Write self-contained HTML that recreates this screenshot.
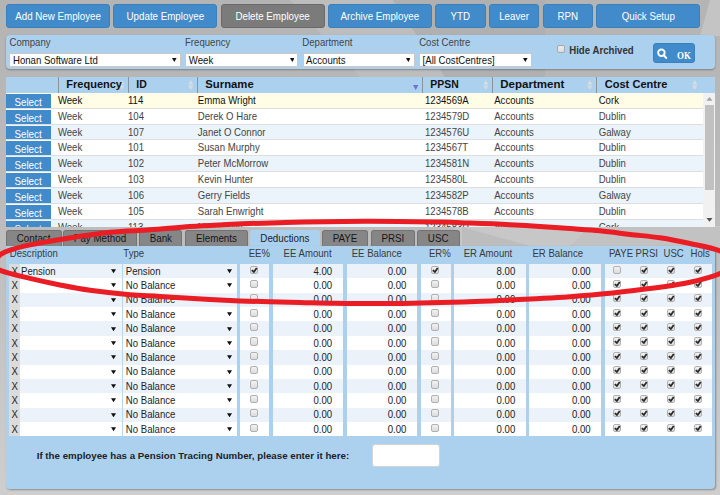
<!DOCTYPE html>
<html><head><meta charset="utf-8"><style>
html,body{margin:0;padding:0;}
body{width:720px;height:495px;position:relative;overflow:hidden;background:linear-gradient(180deg,#b4b4b4 0px,#bbbbbb 200px,#c2c2c2 300px,#cecece 495px);font-family:"Liberation Sans", sans-serif;}
</style></head><body>
<svg style="position:absolute;left:0;top:0" width="720" height="495"><polygon points="290,0 393,0 445,77 360,77" fill="#bdbdbd"/><polygon points="393,0 545,0 545,77 445,77" fill="#b0b0b0"/><polygon points="710,0 720,0 720,36 700,36" fill="#c4c4c4"/><rect x="455" y="226" width="265" height="21" fill="#c7c7c7"/><polygon points="462,227 530,246 462,246" fill="#bdbdbd"/><polygon points="590,227 720,227 720,246 570,246" fill="#c2c2c2"/></svg>
<div style="position:absolute;left:6.00px;top:4.00px;width:104.20px;height:24.00px;background:#428bca;border:1px solid #3b7fbd;box-sizing:border-box;border-radius:3px;"></div>
<svg style="position:absolute;left:0;top:0;overflow:visible" width="1" height="1"><text x="15.24" y="19.90" font-family="Liberation Sans" font-size="10.93" font-weight="normal" fill="#fff" textLength="85.71" lengthAdjust="spacingAndGlyphs">Add New Employee</text></svg>
<div style="position:absolute;left:113.25px;top:4.00px;width:104.20px;height:24.00px;background:#428bca;border:1px solid #3b7fbd;box-sizing:border-box;border-radius:3px;"></div>
<svg style="position:absolute;left:0;top:0;overflow:visible" width="1" height="1"><text x="126.56" y="19.90" font-family="Liberation Sans" font-size="10.93" font-weight="normal" fill="#fff" textLength="77.58" lengthAdjust="spacingAndGlyphs">Update Employee</text></svg>
<div style="position:absolute;left:220.50px;top:4.00px;width:104.20px;height:24.00px;background:#7b7b7b;border:1px solid #6a6a6a;box-sizing:border-box;border-radius:3px;"></div>
<svg style="position:absolute;left:0;top:0;overflow:visible" width="1" height="1"><text x="235.44" y="19.90" font-family="Liberation Sans" font-size="10.93" font-weight="normal" fill="#fff" textLength="74.32" lengthAdjust="spacingAndGlyphs">Delete Employee</text></svg>
<div style="position:absolute;left:327.75px;top:4.00px;width:104.20px;height:24.00px;background:#428bca;border:1px solid #3b7fbd;box-sizing:border-box;border-radius:3px;"></div>
<svg style="position:absolute;left:0;top:0;overflow:visible" width="1" height="1"><text x="340.52" y="19.90" font-family="Liberation Sans" font-size="10.93" font-weight="normal" fill="#fff" textLength="78.65" lengthAdjust="spacingAndGlyphs">Archive Employee</text></svg>
<div style="position:absolute;left:435.00px;top:4.00px;width:50.70px;height:24.00px;background:#428bca;border:1px solid #3b7fbd;box-sizing:border-box;border-radius:3px;"></div>
<svg style="position:absolute;left:0;top:0;overflow:visible" width="1" height="1"><text x="450.59" y="19.90" font-family="Liberation Sans" font-size="10.93" font-weight="normal" fill="#fff" textLength="19.52" lengthAdjust="spacingAndGlyphs">YTD</text></svg>
<div style="position:absolute;left:488.75px;top:4.00px;width:50.70px;height:24.00px;background:#428bca;border:1px solid #3b7fbd;box-sizing:border-box;border-radius:3px;"></div>
<svg style="position:absolute;left:0;top:0;overflow:visible" width="1" height="1"><text x="499.18" y="19.90" font-family="Liberation Sans" font-size="10.93" font-weight="normal" fill="#fff" textLength="29.84" lengthAdjust="spacingAndGlyphs">Leaver</text></svg>
<div style="position:absolute;left:542.50px;top:4.00px;width:50.70px;height:24.00px;background:#428bca;border:1px solid #3b7fbd;box-sizing:border-box;border-radius:3px;"></div>
<svg style="position:absolute;left:0;top:0;overflow:visible" width="1" height="1"><text x="557.55" y="19.90" font-family="Liberation Sans" font-size="10.93" font-weight="normal" fill="#fff" textLength="20.61" lengthAdjust="spacingAndGlyphs">RPN</text></svg>
<div style="position:absolute;left:596.25px;top:4.00px;width:104.20px;height:24.00px;background:#428bca;border:1px solid #3b7fbd;box-sizing:border-box;border-radius:3px;"></div>
<svg style="position:absolute;left:0;top:0;overflow:visible" width="1" height="1"><text x="621.77" y="19.90" font-family="Liberation Sans" font-size="10.93" font-weight="normal" fill="#fff" textLength="53.16" lengthAdjust="spacingAndGlyphs">Quick Setup</text></svg>
<div style="position:absolute;left:5.50px;top:35.00px;width:709.50px;height:34.30px;background:#abd1ef;border-radius:4px;box-shadow:0 1px 2px rgba(0,0,0,0.3);"></div>
<svg style="position:absolute;left:0;top:0;overflow:visible" width="1" height="1"><text x="9.50" y="46.00" font-family="Liberation Sans" font-size="10.75" font-weight="normal" fill="#444" textLength="41.08" lengthAdjust="spacingAndGlyphs">Company</text></svg>
<svg style="position:absolute;left:0;top:0;overflow:visible" width="1" height="1"><text x="185.00" y="46.00" font-family="Liberation Sans" font-size="10.75" font-weight="normal" fill="#444" textLength="45.35" lengthAdjust="spacingAndGlyphs">Frequency</text></svg>
<svg style="position:absolute;left:0;top:0;overflow:visible" width="1" height="1"><text x="302.30" y="46.00" font-family="Liberation Sans" font-size="10.75" font-weight="normal" fill="#444" textLength="50.15" lengthAdjust="spacingAndGlyphs">Department</text></svg>
<svg style="position:absolute;left:0;top:0;overflow:visible" width="1" height="1"><text x="419.20" y="46.00" font-family="Liberation Sans" font-size="10.75" font-weight="normal" fill="#444" textLength="51.22" lengthAdjust="spacingAndGlyphs">Cost Centre</text></svg>
<div style="position:absolute;left:9.40px;top:53.30px;width:171.40px;height:13.70px;background:#fff;border:1px solid #cfc8c2;box-sizing:border-box;"></div>
<svg style="position:absolute;left:0;top:0;overflow:visible" width="1" height="1"><text x="13.00" y="63.80" font-family="Liberation Sans" font-size="10.75" font-weight="normal" fill="#111" textLength="84.85" lengthAdjust="spacingAndGlyphs">Honan Software Ltd</text></svg>
<svg style="position:absolute;left:172.10px;top:58.1px" width="4.6" height="4" viewBox="0 0 4.6 4"><path d="M0 0 L4.6 0 L2.3 4 Z" fill="#111"/></svg>
<div style="position:absolute;left:185.25px;top:53.30px;width:112.95px;height:13.70px;background:#fff;border:1px solid #cfc8c2;box-sizing:border-box;"></div>
<svg style="position:absolute;left:0;top:0;overflow:visible" width="1" height="1"><text x="188.85" y="63.80" font-family="Liberation Sans" font-size="10.75" font-weight="normal" fill="#111" textLength="24.36" lengthAdjust="spacingAndGlyphs">Week</text></svg>
<svg style="position:absolute;left:289.50px;top:58.1px" width="4.6" height="4" viewBox="0 0 4.6 4"><path d="M0 0 L4.6 0 L2.3 4 Z" fill="#111"/></svg>
<div style="position:absolute;left:302.50px;top:53.30px;width:112.10px;height:13.70px;background:#fff;border:1px solid #cfc8c2;box-sizing:border-box;"></div>
<svg style="position:absolute;left:0;top:0;overflow:visible" width="1" height="1"><text x="306.10" y="63.80" font-family="Liberation Sans" font-size="10.75" font-weight="normal" fill="#111" textLength="39.49" lengthAdjust="spacingAndGlyphs">Accounts</text></svg>
<svg style="position:absolute;left:405.90px;top:58.1px" width="4.6" height="4" viewBox="0 0 4.6 4"><path d="M0 0 L4.6 0 L2.3 4 Z" fill="#111"/></svg>
<div style="position:absolute;left:419.00px;top:53.30px;width:112.80px;height:13.70px;background:#fff;border:1px solid #cfc8c2;box-sizing:border-box;"></div>
<svg style="position:absolute;left:0;top:0;overflow:visible" width="1" height="1"><text x="422.60" y="63.80" font-family="Liberation Sans" font-size="10.75" font-weight="normal" fill="#111" textLength="72.02" lengthAdjust="spacingAndGlyphs">[All CostCentres]</text></svg>
<svg style="position:absolute;left:523.10px;top:58.1px" width="4.6" height="4" viewBox="0 0 4.6 4"><path d="M0 0 L4.6 0 L2.3 4 Z" fill="#111"/></svg>
<div style="position:absolute;left:557.00px;top:45.20px;width:7.80px;height:8.10px;background:linear-gradient(#ececec,#dcdcdc);border:1px solid #a9a9a9;box-sizing:border-box;border-radius:2px;"></div>
<svg style="position:absolute;left:0;top:0;overflow:visible" width="1" height="1"><text x="569.20" y="54.10" font-family="Liberation Sans" font-size="10.3" font-weight="bold" fill="#333" textLength="64.50" lengthAdjust="spacingAndGlyphs">Hide Archived</text></svg>
<div style="position:absolute;left:653.10px;top:43.00px;width:41.70px;height:19.60px;background:#428bca;border:1px solid #3b7fbd;box-sizing:border-box;border-radius:3px;"></div>
<svg style="position:absolute;left:655px;top:47px" width="16" height="14" viewBox="0 0 16 14"><circle cx="6.4" cy="5.7" r="3.25" fill="none" stroke="#fff" stroke-width="1.9"/><line x1="8.8" y1="8.2" x2="11.2" y2="10.9" stroke="#fff" stroke-width="2.1" stroke-linecap="round"/></svg>
<svg style="position:absolute;left:0;top:0;overflow:visible" width="1" height="1"><text x="677.10" y="59.00" font-family="Liberation Serif" font-size="10.8" font-weight="bold" fill="#fff" textLength="13.90" lengthAdjust="spacingAndGlyphs">OK</text></svg>
<div style="position:absolute;left:5.60px;top:76.90px;width:709.40px;height:15.80px;background:#abd1ef;"></div>
<div style="position:absolute;left:57.90px;top:77.00px;width:1.20px;height:15.70px;background:#8c9399;"></div>
<div style="position:absolute;left:127.50px;top:77.00px;width:1.20px;height:15.70px;background:#8c9399;"></div>
<div style="position:absolute;left:196.90px;top:77.00px;width:1.20px;height:15.70px;background:#8c9399;"></div>
<div style="position:absolute;left:421.90px;top:77.00px;width:1.20px;height:15.70px;background:#8c9399;"></div>
<div style="position:absolute;left:491.90px;top:77.00px;width:1.20px;height:15.70px;background:#8c9399;"></div>
<div style="position:absolute;left:595.60px;top:77.00px;width:1.20px;height:15.70px;background:#8c9399;"></div>
<svg style="position:absolute;left:118.8px;top:80px" width="5.5" height="10" viewBox="0 0 5.5 10"><path d="M2.75 0.2 L5.5 4.4 L0 4.4 Z M2.75 9.8 L5.5 5.6 L0 5.6 Z" fill="#d9dcdc"/></svg>
<svg style="position:absolute;left:188.1px;top:80px" width="5.5" height="10" viewBox="0 0 5.5 10"><path d="M2.75 0.2 L5.5 4.4 L0 4.4 Z M2.75 9.8 L5.5 5.6 L0 5.6 Z" fill="#d9dcdc"/></svg>
<svg style="position:absolute;left:482.6px;top:80px" width="5.5" height="10" viewBox="0 0 5.5 10"><path d="M2.75 0.2 L5.5 4.4 L0 4.4 Z M2.75 9.8 L5.5 5.6 L0 5.6 Z" fill="#d9dcdc"/></svg>
<svg style="position:absolute;left:587.2px;top:80px" width="5.5" height="10" viewBox="0 0 5.5 10"><path d="M2.75 0.2 L5.5 4.4 L0 4.4 Z M2.75 9.8 L5.5 5.6 L0 5.6 Z" fill="#d9dcdc"/></svg>
<svg style="position:absolute;left:691.8px;top:80px" width="5.5" height="10" viewBox="0 0 5.5 10"><path d="M2.75 0.2 L5.5 4.4 L0 4.4 Z M2.75 9.8 L5.5 5.6 L0 5.6 Z" fill="#d9dcdc"/></svg>
<svg style="position:absolute;left:412.8px;top:84.9px" width="5.4" height="5.1" viewBox="0 0 5.4 5.1"><path d="M0 0 L5.4 0 L2.7 5.1 Z" fill="#7371d8"/></svg>
<svg style="position:absolute;left:0;top:0;overflow:visible" width="1" height="1"><text x="66.30" y="88.00" font-family="Liberation Sans" font-size="10.6" font-weight="bold" fill="#111" textLength="55.70" lengthAdjust="spacingAndGlyphs">Frequency</text></svg>
<svg style="position:absolute;left:0;top:0;overflow:visible" width="1" height="1"><text x="136.25" y="88.00" font-family="Liberation Sans" font-size="10.6" font-weight="bold" fill="#111" textLength="10.50" lengthAdjust="spacingAndGlyphs">ID</text></svg>
<svg style="position:absolute;left:0;top:0;overflow:visible" width="1" height="1"><text x="205.30" y="88.00" font-family="Liberation Sans" font-size="10.6" font-weight="bold" fill="#111" textLength="48.40" lengthAdjust="spacingAndGlyphs">Surname</text></svg>
<svg style="position:absolute;left:0;top:0;overflow:visible" width="1" height="1"><text x="430.30" y="88.00" font-family="Liberation Sans" font-size="10.6" font-weight="bold" fill="#111" textLength="28.40" lengthAdjust="spacingAndGlyphs">PPSN</text></svg>
<svg style="position:absolute;left:0;top:0;overflow:visible" width="1" height="1"><text x="500.20" y="88.00" font-family="Liberation Sans" font-size="10.6" font-weight="bold" fill="#111" textLength="64.10" lengthAdjust="spacingAndGlyphs">Department</text></svg>
<svg style="position:absolute;left:0;top:0;overflow:visible" width="1" height="1"><text x="604.70" y="88.00" font-family="Liberation Sans" font-size="10.6" font-weight="bold" fill="#111" textLength="62.80" lengthAdjust="spacingAndGlyphs">Cost Centre</text></svg>
<div style="position:absolute;left:0;top:93px;width:720px;height:134.10px;overflow:hidden;background:transparent">
<div style="position:absolute;left:5.60px;top:0.00px;width:709.40px;height:134.10px;background:#fff;"></div>
<div style="position:absolute;left:5.6px;top:0.00px;width:697.40px;height:14.83px;background:#fffde5;border-bottom:1px solid #dedede"></div>
<div style="position:absolute;left:5.6px;top:1.00px;width:45.30px;height:13.83px;background:#428bca"></div>
<svg style="position:absolute;left:0;top:0;overflow:visible" width="1" height="1"><text x="14.40" y="12.90" font-family="Liberation Sans" font-size="10.2" font-weight="normal" fill="#fff" textLength="27.30" lengthAdjust="spacingAndGlyphs">Select</text></svg>
<svg style="position:absolute;left:0;top:0;overflow:visible" width="1" height="1"><text x="57.90" y="10.90" font-family="Liberation Sans" font-size="10.75" font-weight="normal" fill="#111" textLength="24.36" lengthAdjust="spacingAndGlyphs">Week</text></svg>
<svg style="position:absolute;left:0;top:0;overflow:visible" width="1" height="1"><text x="128.00" y="10.90" font-family="Liberation Sans" font-size="10.75" font-weight="normal" fill="#111" textLength="15.30" lengthAdjust="spacingAndGlyphs">114</text></svg>
<svg style="position:absolute;left:0;top:0;overflow:visible" width="1" height="1"><text x="197.80" y="10.90" font-family="Liberation Sans" font-size="10.75" font-weight="normal" fill="#111" textLength="57.96" lengthAdjust="spacingAndGlyphs">Emma Wright</text></svg>
<svg style="position:absolute;left:0;top:0;overflow:visible" width="1" height="1"><text x="425.00" y="10.90" font-family="Liberation Sans" font-size="10.75" font-weight="normal" fill="#111" textLength="43.77" lengthAdjust="spacingAndGlyphs">1234569A</text></svg>
<svg style="position:absolute;left:0;top:0;overflow:visible" width="1" height="1"><text x="494.20" y="10.90" font-family="Liberation Sans" font-size="10.75" font-weight="normal" fill="#111" textLength="39.49" lengthAdjust="spacingAndGlyphs">Accounts</text></svg>
<svg style="position:absolute;left:0;top:0;overflow:visible" width="1" height="1"><text x="598.70" y="10.90" font-family="Liberation Sans" font-size="10.75" font-weight="normal" fill="#111" textLength="20.27" lengthAdjust="spacingAndGlyphs">Cork</text></svg>
<div style="position:absolute;left:5.6px;top:15.83px;width:697.40px;height:14.83px;background:#ffffff;border-bottom:1px solid #dedede"></div>
<div style="position:absolute;left:5.6px;top:16.83px;width:45.30px;height:13.83px;background:#428bca"></div>
<svg style="position:absolute;left:0;top:0;overflow:visible" width="1" height="1"><text x="14.40" y="28.73" font-family="Liberation Sans" font-size="10.2" font-weight="normal" fill="#fff" textLength="27.30" lengthAdjust="spacingAndGlyphs">Select</text></svg>
<svg style="position:absolute;left:0;top:0;overflow:visible" width="1" height="1"><text x="57.90" y="26.73" font-family="Liberation Sans" font-size="10.75" font-weight="normal" fill="#444" textLength="24.36" lengthAdjust="spacingAndGlyphs">Week</text></svg>
<svg style="position:absolute;left:0;top:0;overflow:visible" width="1" height="1"><text x="128.00" y="26.73" font-family="Liberation Sans" font-size="10.75" font-weight="normal" fill="#444" textLength="16.02" lengthAdjust="spacingAndGlyphs">104</text></svg>
<svg style="position:absolute;left:0;top:0;overflow:visible" width="1" height="1"><text x="197.80" y="26.73" font-family="Liberation Sans" font-size="10.75" font-weight="normal" fill="#444" textLength="59.21" lengthAdjust="spacingAndGlyphs">Derek O Hare</text></svg>
<svg style="position:absolute;left:0;top:0;overflow:visible" width="1" height="1"><text x="425.00" y="26.73" font-family="Liberation Sans" font-size="10.75" font-weight="normal" fill="#444" textLength="44.30" lengthAdjust="spacingAndGlyphs">1234579D</text></svg>
<svg style="position:absolute;left:0;top:0;overflow:visible" width="1" height="1"><text x="494.20" y="26.73" font-family="Liberation Sans" font-size="10.75" font-weight="normal" fill="#444" textLength="39.49" lengthAdjust="spacingAndGlyphs">Accounts</text></svg>
<svg style="position:absolute;left:0;top:0;overflow:visible" width="1" height="1"><text x="598.70" y="26.73" font-family="Liberation Sans" font-size="10.75" font-weight="normal" fill="#444" textLength="27.21" lengthAdjust="spacingAndGlyphs">Dublin</text></svg>
<div style="position:absolute;left:5.6px;top:31.66px;width:697.40px;height:14.83px;background:#ebf3fb;border-bottom:1px solid #dedede"></div>
<div style="position:absolute;left:5.6px;top:32.66px;width:45.30px;height:13.83px;background:#428bca"></div>
<svg style="position:absolute;left:0;top:0;overflow:visible" width="1" height="1"><text x="14.40" y="44.56" font-family="Liberation Sans" font-size="10.2" font-weight="normal" fill="#fff" textLength="27.30" lengthAdjust="spacingAndGlyphs">Select</text></svg>
<svg style="position:absolute;left:0;top:0;overflow:visible" width="1" height="1"><text x="57.90" y="42.56" font-family="Liberation Sans" font-size="10.75" font-weight="normal" fill="#444" textLength="24.36" lengthAdjust="spacingAndGlyphs">Week</text></svg>
<svg style="position:absolute;left:0;top:0;overflow:visible" width="1" height="1"><text x="128.00" y="42.56" font-family="Liberation Sans" font-size="10.75" font-weight="normal" fill="#444" textLength="16.02" lengthAdjust="spacingAndGlyphs">107</text></svg>
<svg style="position:absolute;left:0;top:0;overflow:visible" width="1" height="1"><text x="197.80" y="42.56" font-family="Liberation Sans" font-size="10.75" font-weight="normal" fill="#444" textLength="67.77" lengthAdjust="spacingAndGlyphs">Janet O Connor</text></svg>
<svg style="position:absolute;left:0;top:0;overflow:visible" width="1" height="1"><text x="425.00" y="42.56" font-family="Liberation Sans" font-size="10.75" font-weight="normal" fill="#444" textLength="44.30" lengthAdjust="spacingAndGlyphs">1234576U</text></svg>
<svg style="position:absolute;left:0;top:0;overflow:visible" width="1" height="1"><text x="494.20" y="42.56" font-family="Liberation Sans" font-size="10.75" font-weight="normal" fill="#444" textLength="39.49" lengthAdjust="spacingAndGlyphs">Accounts</text></svg>
<svg style="position:absolute;left:0;top:0;overflow:visible" width="1" height="1"><text x="598.70" y="42.56" font-family="Liberation Sans" font-size="10.75" font-weight="normal" fill="#444" textLength="32.01" lengthAdjust="spacingAndGlyphs">Galway</text></svg>
<div style="position:absolute;left:5.6px;top:47.49px;width:697.40px;height:14.83px;background:#ffffff;border-bottom:1px solid #dedede"></div>
<div style="position:absolute;left:5.6px;top:48.49px;width:45.30px;height:13.83px;background:#428bca"></div>
<svg style="position:absolute;left:0;top:0;overflow:visible" width="1" height="1"><text x="14.40" y="60.39" font-family="Liberation Sans" font-size="10.2" font-weight="normal" fill="#fff" textLength="27.30" lengthAdjust="spacingAndGlyphs">Select</text></svg>
<svg style="position:absolute;left:0;top:0;overflow:visible" width="1" height="1"><text x="57.90" y="58.39" font-family="Liberation Sans" font-size="10.75" font-weight="normal" fill="#444" textLength="24.36" lengthAdjust="spacingAndGlyphs">Week</text></svg>
<svg style="position:absolute;left:0;top:0;overflow:visible" width="1" height="1"><text x="128.00" y="58.39" font-family="Liberation Sans" font-size="10.75" font-weight="normal" fill="#444" textLength="16.02" lengthAdjust="spacingAndGlyphs">101</text></svg>
<svg style="position:absolute;left:0;top:0;overflow:visible" width="1" height="1"><text x="197.80" y="58.39" font-family="Liberation Sans" font-size="10.75" font-weight="normal" fill="#444" textLength="61.89" lengthAdjust="spacingAndGlyphs">Susan Murphy</text></svg>
<svg style="position:absolute;left:0;top:0;overflow:visible" width="1" height="1"><text x="425.00" y="58.39" font-family="Liberation Sans" font-size="10.75" font-weight="normal" fill="#444" textLength="43.23" lengthAdjust="spacingAndGlyphs">1234567T</text></svg>
<svg style="position:absolute;left:0;top:0;overflow:visible" width="1" height="1"><text x="494.20" y="58.39" font-family="Liberation Sans" font-size="10.75" font-weight="normal" fill="#444" textLength="39.49" lengthAdjust="spacingAndGlyphs">Accounts</text></svg>
<svg style="position:absolute;left:0;top:0;overflow:visible" width="1" height="1"><text x="598.70" y="58.39" font-family="Liberation Sans" font-size="10.75" font-weight="normal" fill="#444" textLength="27.21" lengthAdjust="spacingAndGlyphs">Dublin</text></svg>
<div style="position:absolute;left:5.6px;top:63.32px;width:697.40px;height:14.83px;background:#ebf3fb;border-bottom:1px solid #dedede"></div>
<div style="position:absolute;left:5.6px;top:64.32px;width:45.30px;height:13.83px;background:#428bca"></div>
<svg style="position:absolute;left:0;top:0;overflow:visible" width="1" height="1"><text x="14.40" y="76.22" font-family="Liberation Sans" font-size="10.2" font-weight="normal" fill="#fff" textLength="27.30" lengthAdjust="spacingAndGlyphs">Select</text></svg>
<svg style="position:absolute;left:0;top:0;overflow:visible" width="1" height="1"><text x="57.90" y="74.22" font-family="Liberation Sans" font-size="10.75" font-weight="normal" fill="#444" textLength="24.36" lengthAdjust="spacingAndGlyphs">Week</text></svg>
<svg style="position:absolute;left:0;top:0;overflow:visible" width="1" height="1"><text x="128.00" y="74.22" font-family="Liberation Sans" font-size="10.75" font-weight="normal" fill="#444" textLength="16.02" lengthAdjust="spacingAndGlyphs">102</text></svg>
<svg style="position:absolute;left:0;top:0;overflow:visible" width="1" height="1"><text x="197.80" y="74.22" font-family="Liberation Sans" font-size="10.75" font-weight="normal" fill="#444" textLength="70.41" lengthAdjust="spacingAndGlyphs">Peter McMorrow</text></svg>
<svg style="position:absolute;left:0;top:0;overflow:visible" width="1" height="1"><text x="425.00" y="74.22" font-family="Liberation Sans" font-size="10.75" font-weight="normal" fill="#444" textLength="44.30" lengthAdjust="spacingAndGlyphs">1234581N</text></svg>
<svg style="position:absolute;left:0;top:0;overflow:visible" width="1" height="1"><text x="494.20" y="74.22" font-family="Liberation Sans" font-size="10.75" font-weight="normal" fill="#444" textLength="39.49" lengthAdjust="spacingAndGlyphs">Accounts</text></svg>
<svg style="position:absolute;left:0;top:0;overflow:visible" width="1" height="1"><text x="598.70" y="74.22" font-family="Liberation Sans" font-size="10.75" font-weight="normal" fill="#444" textLength="27.21" lengthAdjust="spacingAndGlyphs">Dublin</text></svg>
<div style="position:absolute;left:5.6px;top:79.15px;width:697.40px;height:14.83px;background:#ffffff;border-bottom:1px solid #dedede"></div>
<div style="position:absolute;left:5.6px;top:80.15px;width:45.30px;height:13.83px;background:#428bca"></div>
<svg style="position:absolute;left:0;top:0;overflow:visible" width="1" height="1"><text x="14.40" y="92.05" font-family="Liberation Sans" font-size="10.2" font-weight="normal" fill="#fff" textLength="27.30" lengthAdjust="spacingAndGlyphs">Select</text></svg>
<svg style="position:absolute;left:0;top:0;overflow:visible" width="1" height="1"><text x="57.90" y="90.05" font-family="Liberation Sans" font-size="10.75" font-weight="normal" fill="#444" textLength="24.36" lengthAdjust="spacingAndGlyphs">Week</text></svg>
<svg style="position:absolute;left:0;top:0;overflow:visible" width="1" height="1"><text x="128.00" y="90.05" font-family="Liberation Sans" font-size="10.75" font-weight="normal" fill="#444" textLength="16.02" lengthAdjust="spacingAndGlyphs">103</text></svg>
<svg style="position:absolute;left:0;top:0;overflow:visible" width="1" height="1"><text x="197.80" y="90.05" font-family="Liberation Sans" font-size="10.75" font-weight="normal" fill="#444" textLength="55.49" lengthAdjust="spacingAndGlyphs">Kevin Hunter</text></svg>
<svg style="position:absolute;left:0;top:0;overflow:visible" width="1" height="1"><text x="425.00" y="90.05" font-family="Liberation Sans" font-size="10.75" font-weight="normal" fill="#444" textLength="42.71" lengthAdjust="spacingAndGlyphs">1234580L</text></svg>
<svg style="position:absolute;left:0;top:0;overflow:visible" width="1" height="1"><text x="494.20" y="90.05" font-family="Liberation Sans" font-size="10.75" font-weight="normal" fill="#444" textLength="39.49" lengthAdjust="spacingAndGlyphs">Accounts</text></svg>
<svg style="position:absolute;left:0;top:0;overflow:visible" width="1" height="1"><text x="598.70" y="90.05" font-family="Liberation Sans" font-size="10.75" font-weight="normal" fill="#444" textLength="27.21" lengthAdjust="spacingAndGlyphs">Dublin</text></svg>
<div style="position:absolute;left:5.6px;top:94.98px;width:697.40px;height:14.83px;background:#ebf3fb;border-bottom:1px solid #dedede"></div>
<div style="position:absolute;left:5.6px;top:95.98px;width:45.30px;height:13.83px;background:#428bca"></div>
<svg style="position:absolute;left:0;top:0;overflow:visible" width="1" height="1"><text x="14.40" y="107.88" font-family="Liberation Sans" font-size="10.2" font-weight="normal" fill="#fff" textLength="27.30" lengthAdjust="spacingAndGlyphs">Select</text></svg>
<svg style="position:absolute;left:0;top:0;overflow:visible" width="1" height="1"><text x="57.90" y="105.88" font-family="Liberation Sans" font-size="10.75" font-weight="normal" fill="#444" textLength="24.36" lengthAdjust="spacingAndGlyphs">Week</text></svg>
<svg style="position:absolute;left:0;top:0;overflow:visible" width="1" height="1"><text x="128.00" y="105.88" font-family="Liberation Sans" font-size="10.75" font-weight="normal" fill="#444" textLength="16.02" lengthAdjust="spacingAndGlyphs">106</text></svg>
<svg style="position:absolute;left:0;top:0;overflow:visible" width="1" height="1"><text x="197.80" y="105.88" font-family="Liberation Sans" font-size="10.75" font-weight="normal" fill="#444" textLength="52.27" lengthAdjust="spacingAndGlyphs">Gerry Fields</text></svg>
<svg style="position:absolute;left:0;top:0;overflow:visible" width="1" height="1"><text x="425.00" y="105.88" font-family="Liberation Sans" font-size="10.75" font-weight="normal" fill="#444" textLength="43.77" lengthAdjust="spacingAndGlyphs">1234582P</text></svg>
<svg style="position:absolute;left:0;top:0;overflow:visible" width="1" height="1"><text x="494.20" y="105.88" font-family="Liberation Sans" font-size="10.75" font-weight="normal" fill="#444" textLength="39.49" lengthAdjust="spacingAndGlyphs">Accounts</text></svg>
<svg style="position:absolute;left:0;top:0;overflow:visible" width="1" height="1"><text x="598.70" y="105.88" font-family="Liberation Sans" font-size="10.75" font-weight="normal" fill="#444" textLength="32.01" lengthAdjust="spacingAndGlyphs">Galway</text></svg>
<div style="position:absolute;left:5.6px;top:110.81px;width:697.40px;height:14.83px;background:#ffffff;border-bottom:1px solid #dedede"></div>
<div style="position:absolute;left:5.6px;top:111.81px;width:45.30px;height:13.83px;background:#428bca"></div>
<svg style="position:absolute;left:0;top:0;overflow:visible" width="1" height="1"><text x="14.40" y="123.71" font-family="Liberation Sans" font-size="10.2" font-weight="normal" fill="#fff" textLength="27.30" lengthAdjust="spacingAndGlyphs">Select</text></svg>
<svg style="position:absolute;left:0;top:0;overflow:visible" width="1" height="1"><text x="57.90" y="121.71" font-family="Liberation Sans" font-size="10.75" font-weight="normal" fill="#444" textLength="24.36" lengthAdjust="spacingAndGlyphs">Week</text></svg>
<svg style="position:absolute;left:0;top:0;overflow:visible" width="1" height="1"><text x="128.00" y="121.71" font-family="Liberation Sans" font-size="10.75" font-weight="normal" fill="#444" textLength="16.02" lengthAdjust="spacingAndGlyphs">105</text></svg>
<svg style="position:absolute;left:0;top:0;overflow:visible" width="1" height="1"><text x="197.80" y="121.71" font-family="Liberation Sans" font-size="10.75" font-weight="normal" fill="#444" textLength="65.63" lengthAdjust="spacingAndGlyphs">Sarah Enwright</text></svg>
<svg style="position:absolute;left:0;top:0;overflow:visible" width="1" height="1"><text x="425.00" y="121.71" font-family="Liberation Sans" font-size="10.75" font-weight="normal" fill="#444" textLength="43.77" lengthAdjust="spacingAndGlyphs">1234578B</text></svg>
<svg style="position:absolute;left:0;top:0;overflow:visible" width="1" height="1"><text x="494.20" y="121.71" font-family="Liberation Sans" font-size="10.75" font-weight="normal" fill="#444" textLength="39.49" lengthAdjust="spacingAndGlyphs">Accounts</text></svg>
<svg style="position:absolute;left:0;top:0;overflow:visible" width="1" height="1"><text x="598.70" y="121.71" font-family="Liberation Sans" font-size="10.75" font-weight="normal" fill="#444" textLength="27.21" lengthAdjust="spacingAndGlyphs">Dublin</text></svg>
<div style="position:absolute;left:5.6px;top:126.64px;width:697.40px;height:14.83px;background:#ebf3fb;border-bottom:1px solid #dedede"></div>
<div style="position:absolute;left:5.6px;top:127.64px;width:45.30px;height:13.83px;background:#428bca"></div>
<svg style="position:absolute;left:0;top:0;overflow:visible" width="1" height="1"><text x="14.40" y="139.54" font-family="Liberation Sans" font-size="10.2" font-weight="normal" fill="#fff" textLength="27.30" lengthAdjust="spacingAndGlyphs">Select</text></svg>
<svg style="position:absolute;left:0;top:0;overflow:visible" width="1" height="1"><text x="57.90" y="137.54" font-family="Liberation Sans" font-size="10.75" font-weight="normal" fill="#444" textLength="24.36" lengthAdjust="spacingAndGlyphs">Week</text></svg>
<svg style="position:absolute;left:0;top:0;overflow:visible" width="1" height="1"><text x="128.00" y="137.54" font-family="Liberation Sans" font-size="10.75" font-weight="normal" fill="#444" textLength="15.30" lengthAdjust="spacingAndGlyphs">113</text></svg>
<svg style="position:absolute;left:0;top:0;overflow:visible" width="1" height="1"><text x="197.80" y="137.54" font-family="Liberation Sans" font-size="10.75" font-weight="normal" fill="#444" textLength="44.81" lengthAdjust="spacingAndGlyphs">Mary Kelly</text></svg>
<svg style="position:absolute;left:0;top:0;overflow:visible" width="1" height="1"><text x="425.00" y="137.54" font-family="Liberation Sans" font-size="10.75" font-weight="normal" fill="#444" textLength="44.30" lengthAdjust="spacingAndGlyphs">1234583R</text></svg>
<svg style="position:absolute;left:0;top:0;overflow:visible" width="1" height="1"><text x="494.20" y="137.54" font-family="Liberation Sans" font-size="10.75" font-weight="normal" fill="#444" textLength="39.49" lengthAdjust="spacingAndGlyphs">Accounts</text></svg>
<svg style="position:absolute;left:0;top:0;overflow:visible" width="1" height="1"><text x="598.70" y="137.54" font-family="Liberation Sans" font-size="10.75" font-weight="normal" fill="#444" textLength="20.27" lengthAdjust="spacingAndGlyphs">Cork</text></svg>
</div>
<div style="position:absolute;left:703.00px;top:93.00px;width:12.00px;height:134.10px;background:#f1f1f1;"></div>
<div style="position:absolute;left:704.80px;top:105.20px;width:8.90px;height:84.50px;background:#c1c1c1;"></div>
<svg style="position:absolute;left:705.5px;top:96.5px" width="7" height="4" viewBox="0 0 7 4"><path d="M3.5 0 L6.5 3.8 L0.5 3.8 Z" fill="#a3a3a3"/></svg>
<svg style="position:absolute;left:705.5px;top:218px" width="7" height="4" viewBox="0 0 7 4"><path d="M3.5 3.8 L6.5 0 L0.5 0 Z" fill="#505050"/></svg>
<div style="position:absolute;left:5.50px;top:230.20px;width:56.20px;height:15.40px;background:#868686;border:1px solid #737373;border-bottom:none;box-sizing:border-box;border-radius:3px 3px 0 0;"></div>
<svg style="position:absolute;left:0;top:0;overflow:visible" width="1" height="1"><text x="16.71" y="241.70" font-family="Liberation Sans" font-size="10.98" font-weight="normal" fill="#151515" textLength="33.77" lengthAdjust="spacingAndGlyphs">Contact</text></svg>
<div style="position:absolute;left:63.00px;top:230.20px;width:74.00px;height:15.40px;background:#868686;border:1px solid #737373;border-bottom:none;box-sizing:border-box;border-radius:3px 3px 0 0;"></div>
<svg style="position:absolute;left:0;top:0;overflow:visible" width="1" height="1"><text x="73.85" y="241.70" font-family="Liberation Sans" font-size="10.98" font-weight="normal" fill="#151515" textLength="52.29" lengthAdjust="spacingAndGlyphs">Pay Method</text></svg>
<div style="position:absolute;left:139.20px;top:230.20px;width:43.30px;height:15.40px;background:#868686;border:1px solid #737373;border-bottom:none;box-sizing:border-box;border-radius:3px 3px 0 0;"></div>
<svg style="position:absolute;left:0;top:0;overflow:visible" width="1" height="1"><text x="149.68" y="241.70" font-family="Liberation Sans" font-size="10.98" font-weight="normal" fill="#151515" textLength="22.34" lengthAdjust="spacingAndGlyphs">Bank</text></svg>
<div style="position:absolute;left:185.00px;top:230.20px;width:63.00px;height:15.40px;background:#868686;border:1px solid #737373;border-bottom:none;box-sizing:border-box;border-radius:3px 3px 0 0;"></div>
<svg style="position:absolute;left:0;top:0;overflow:visible" width="1" height="1"><text x="196.08" y="241.70" font-family="Liberation Sans" font-size="10.98" font-weight="normal" fill="#151515" textLength="40.85" lengthAdjust="spacingAndGlyphs">Elements</text></svg>
<div style="position:absolute;left:249.70px;top:230.20px;width:70.30px;height:15.80px;background:#abd1ef;border-radius:3px 3px 0 0;"></div>
<svg style="position:absolute;left:0;top:0;overflow:visible" width="1" height="1"><text x="260.34" y="241.70" font-family="Liberation Sans" font-size="10.98" font-weight="normal" fill="#222" textLength="49.03" lengthAdjust="spacingAndGlyphs">Deductions</text></svg>
<div style="position:absolute;left:321.70px;top:230.20px;width:46.60px;height:15.40px;background:#868686;border:1px solid #737373;border-bottom:none;box-sizing:border-box;border-radius:3px 3px 0 0;"></div>
<svg style="position:absolute;left:0;top:0;overflow:visible" width="1" height="1"><text x="332.65" y="241.70" font-family="Liberation Sans" font-size="10.98" font-weight="normal" fill="#151515" textLength="24.69" lengthAdjust="spacingAndGlyphs">PAYE</text></svg>
<div style="position:absolute;left:370.80px;top:230.20px;width:44.20px;height:15.40px;background:#868686;border:1px solid #737373;border-bottom:none;box-sizing:border-box;border-radius:3px 3px 0 0;"></div>
<svg style="position:absolute;left:0;top:0;overflow:visible" width="1" height="1"><text x="381.46" y="241.70" font-family="Liberation Sans" font-size="10.98" font-weight="normal" fill="#151515" textLength="22.87" lengthAdjust="spacingAndGlyphs">PRSI</text></svg>
<div style="position:absolute;left:416.70px;top:230.20px;width:43.00px;height:15.40px;background:#868686;border:1px solid #737373;border-bottom:none;box-sizing:border-box;border-radius:3px 3px 0 0;"></div>
<svg style="position:absolute;left:0;top:0;overflow:visible" width="1" height="1"><text x="427.85" y="241.70" font-family="Liberation Sans" font-size="10.98" font-weight="normal" fill="#151515" textLength="20.69" lengthAdjust="spacingAndGlyphs">USC</text></svg>
<div style="position:absolute;left:5.50px;top:245.60px;width:709.50px;height:243.15px;background:#abd1ef;border-radius:0 0 4px 4px;box-shadow:1px 1px 2px rgba(0,0,0,0.32);"></div>
<svg style="position:absolute;left:0;top:0;overflow:visible" width="1" height="1"><text x="9.80" y="256.70" font-family="Liberation Sans" font-size="10.75" font-weight="normal" fill="#3a3a3a" textLength="48.02" lengthAdjust="spacingAndGlyphs">Description</text></svg>
<svg style="position:absolute;left:0;top:0;overflow:visible" width="1" height="1"><text x="123.30" y="256.70" font-family="Liberation Sans" font-size="10.75" font-weight="normal" fill="#3a3a3a" textLength="20.81" lengthAdjust="spacingAndGlyphs">Type</text></svg>
<svg style="position:absolute;left:0;top:0;overflow:visible" width="1" height="1"><text x="248.70" y="256.70" font-family="Liberation Sans" font-size="10.75" font-weight="normal" fill="#3a3a3a" textLength="21.34" lengthAdjust="spacingAndGlyphs">EE%</text></svg>
<svg style="position:absolute;left:0;top:0;overflow:visible" width="1" height="1"><text x="283.60" y="256.70" font-family="Liberation Sans" font-size="10.75" font-weight="normal" fill="#3a3a3a" textLength="48.03" lengthAdjust="spacingAndGlyphs">EE Amount</text></svg>
<svg style="position:absolute;left:0;top:0;overflow:visible" width="1" height="1"><text x="351.70" y="256.70" font-family="Liberation Sans" font-size="10.75" font-weight="normal" fill="#3a3a3a" textLength="50.16" lengthAdjust="spacingAndGlyphs">EE Balance</text></svg>
<svg style="position:absolute;left:0;top:0;overflow:visible" width="1" height="1"><text x="428.90" y="256.70" font-family="Liberation Sans" font-size="10.75" font-weight="normal" fill="#3a3a3a" textLength="21.87" lengthAdjust="spacingAndGlyphs">ER%</text></svg>
<svg style="position:absolute;left:0;top:0;overflow:visible" width="1" height="1"><text x="463.70" y="256.70" font-family="Liberation Sans" font-size="10.75" font-weight="normal" fill="#3a3a3a" textLength="48.56" lengthAdjust="spacingAndGlyphs">ER Amount</text></svg>
<svg style="position:absolute;left:0;top:0;overflow:visible" width="1" height="1"><text x="532.40" y="256.70" font-family="Liberation Sans" font-size="10.75" font-weight="normal" fill="#3a3a3a" textLength="50.69" lengthAdjust="spacingAndGlyphs">ER Balance</text></svg>
<svg style="position:absolute;left:0;top:0;overflow:visible" width="1" height="1"><text x="608.90" y="256.70" font-family="Liberation Sans" font-size="10.75" font-weight="normal" fill="#3a3a3a" textLength="24.19" lengthAdjust="spacingAndGlyphs">PAYE</text></svg>
<svg style="position:absolute;left:0;top:0;overflow:visible" width="1" height="1"><text x="635.60" y="256.70" font-family="Liberation Sans" font-size="10.75" font-weight="normal" fill="#3a3a3a" textLength="22.41" lengthAdjust="spacingAndGlyphs">PRSI</text></svg>
<svg style="position:absolute;left:0;top:0;overflow:visible" width="1" height="1"><text x="663.50" y="256.70" font-family="Liberation Sans" font-size="10.75" font-weight="normal" fill="#3a3a3a" textLength="20.27" lengthAdjust="spacingAndGlyphs">USC</text></svg>
<svg style="position:absolute;left:0;top:0;overflow:visible" width="1" height="1"><text x="690.60" y="256.70" font-family="Liberation Sans" font-size="10.75" font-weight="normal" fill="#3a3a3a" textLength="19.20" lengthAdjust="spacingAndGlyphs">Hols</text></svg>
<div style="position:absolute;left:9.00px;top:264.00px;width:11.00px;height:14.37px;background:#dcdcdc;"></div>
<svg style="position:absolute;left:0;top:0;overflow:visible" width="1" height="1"><text x="11.50" y="274.70" font-family="Liberation Sans" font-size="10.75" font-weight="normal" fill="#222" textLength="6.40" lengthAdjust="spacingAndGlyphs">X</text></svg>
<div style="position:absolute;left:20.00px;top:264.00px;width:101.80px;height:14.37px;background:#ebf2fa;"></div>
<svg style="position:absolute;left:0;top:0;overflow:visible" width="1" height="1"><text x="21.00" y="274.70" font-family="Liberation Sans" font-size="10.75" font-weight="normal" fill="#1e1e1e" textLength="34.69" lengthAdjust="spacingAndGlyphs">Pension</text></svg>
<svg style="position:absolute;left:110.9px;top:269.10px" width="5" height="4.5" viewBox="0 0 5 4.5"><path d="M0 0.3 L5 0.3 L2.5 4.3 Z" fill="#111"/></svg>
<div style="position:absolute;left:121.80px;top:264.00px;width:1.20px;height:14.37px;background:#b9d8f0;"></div>
<div style="position:absolute;left:123.00px;top:264.00px;width:113.70px;height:14.37px;background:#ebf2fa;"></div>
<svg style="position:absolute;left:0;top:0;overflow:visible" width="1" height="1"><text x="125.80" y="274.70" font-family="Liberation Sans" font-size="10.75" font-weight="normal" fill="#1e1e1e" textLength="34.69" lengthAdjust="spacingAndGlyphs">Pension</text></svg>
<svg style="position:absolute;left:227.2px;top:269.10px" width="5" height="4.5" viewBox="0 0 5 4.5"><path d="M0 0.3 L5 0.3 L2.5 4.3 Z" fill="#111"/></svg>
<div style="position:absolute;left:240.00px;top:264.00px;width:29.20px;height:14.37px;background:#ebf2fa;"></div>
<div style="position:absolute;left:250.00px;top:265.50px;width:8.10px;height:8.20px;background:linear-gradient(#f2f2f2,#dcdcdc);border:1px solid #b0b0b0;box-sizing:border-box;border-radius:2px;"><svg width="8.1" height="8.2" viewBox="0 0 8.1 8.2" style="position:absolute;left:-1px;top:-1px"><path d="M1.8 4.1 L3.9 6.0 L6.7 1.9" fill="none" stroke="#2a2a2a" stroke-width="1.8"/></svg></div>
<div style="position:absolute;left:272.80px;top:264.00px;width:70.20px;height:14.37px;background:#ebf2fa;"></div>
<svg style="position:absolute;left:0;top:0;overflow:visible" width="1" height="1"><text x="313.52" y="274.70" font-family="Liberation Sans" font-size="10.75" font-weight="normal" fill="#222" textLength="18.68" lengthAdjust="spacingAndGlyphs">4.00</text></svg>
<div style="position:absolute;left:346.90px;top:264.00px;width:70.00px;height:14.37px;background:#ebf2fa;"></div>
<svg style="position:absolute;left:0;top:0;overflow:visible" width="1" height="1"><text x="387.72" y="274.70" font-family="Liberation Sans" font-size="10.75" font-weight="normal" fill="#222" textLength="18.68" lengthAdjust="spacingAndGlyphs">0.00</text></svg>
<div style="position:absolute;left:420.60px;top:264.00px;width:30.50px;height:14.37px;background:#ebf2fa;"></div>
<div style="position:absolute;left:431.30px;top:265.50px;width:8.10px;height:8.20px;background:linear-gradient(#f2f2f2,#dcdcdc);border:1px solid #b0b0b0;box-sizing:border-box;border-radius:2px;"><svg width="8.1" height="8.2" viewBox="0 0 8.1 8.2" style="position:absolute;left:-1px;top:-1px"><path d="M1.8 4.1 L3.9 6.0 L6.7 1.9" fill="none" stroke="#2a2a2a" stroke-width="1.8"/></svg></div>
<div style="position:absolute;left:453.90px;top:264.00px;width:72.20px;height:14.37px;background:#ebf2fa;"></div>
<svg style="position:absolute;left:0;top:0;overflow:visible" width="1" height="1"><text x="496.62" y="274.70" font-family="Liberation Sans" font-size="10.75" font-weight="normal" fill="#222" textLength="18.68" lengthAdjust="spacingAndGlyphs">8.00</text></svg>
<div style="position:absolute;left:529.40px;top:264.00px;width:71.70px;height:14.37px;background:#ebf2fa;"></div>
<svg style="position:absolute;left:0;top:0;overflow:visible" width="1" height="1"><text x="571.92" y="274.70" font-family="Liberation Sans" font-size="10.75" font-weight="normal" fill="#222" textLength="18.68" lengthAdjust="spacingAndGlyphs">0.00</text></svg>
<div style="position:absolute;left:604.70px;top:264.00px;width:107.00px;height:14.37px;background:#ebf2fa;"></div>
<div style="position:absolute;left:613.30px;top:265.50px;width:8.10px;height:8.20px;background:linear-gradient(#f2f2f2,#dcdcdc);border:1px solid #b0b0b0;box-sizing:border-box;border-radius:2px;"></div>
<div style="position:absolute;left:640.40px;top:265.50px;width:8.10px;height:8.20px;background:linear-gradient(#f2f2f2,#dcdcdc);border:1px solid #b0b0b0;box-sizing:border-box;border-radius:2px;"><svg width="8.1" height="8.2" viewBox="0 0 8.1 8.2" style="position:absolute;left:-1px;top:-1px"><path d="M1.8 4.1 L3.9 6.0 L6.7 1.9" fill="none" stroke="#2a2a2a" stroke-width="1.8"/></svg></div>
<div style="position:absolute;left:667.10px;top:265.50px;width:8.10px;height:8.20px;background:linear-gradient(#f2f2f2,#dcdcdc);border:1px solid #b0b0b0;box-sizing:border-box;border-radius:2px;"><svg width="8.1" height="8.2" viewBox="0 0 8.1 8.2" style="position:absolute;left:-1px;top:-1px"><path d="M1.8 4.1 L3.9 6.0 L6.7 1.9" fill="none" stroke="#2a2a2a" stroke-width="1.8"/></svg></div>
<div style="position:absolute;left:693.60px;top:265.50px;width:8.10px;height:8.20px;background:linear-gradient(#f2f2f2,#dcdcdc);border:1px solid #b0b0b0;box-sizing:border-box;border-radius:2px;"><svg width="8.1" height="8.2" viewBox="0 0 8.1 8.2" style="position:absolute;left:-1px;top:-1px"><path d="M1.8 4.1 L3.9 6.0 L6.7 1.9" fill="none" stroke="#2a2a2a" stroke-width="1.8"/></svg></div>
<div style="position:absolute;left:9.00px;top:278.37px;width:11.00px;height:14.37px;background:#dcdcdc;"></div>
<svg style="position:absolute;left:0;top:0;overflow:visible" width="1" height="1"><text x="11.50" y="289.07" font-family="Liberation Sans" font-size="10.75" font-weight="normal" fill="#222" textLength="6.40" lengthAdjust="spacingAndGlyphs">X</text></svg>
<div style="position:absolute;left:20.00px;top:278.37px;width:101.80px;height:14.37px;background:#ffffff;"></div>
<svg style="position:absolute;left:110.9px;top:283.47px" width="5" height="4.5" viewBox="0 0 5 4.5"><path d="M0 0.3 L5 0.3 L2.5 4.3 Z" fill="#111"/></svg>
<div style="position:absolute;left:121.80px;top:278.37px;width:1.20px;height:14.37px;background:#b9d8f0;"></div>
<div style="position:absolute;left:123.00px;top:278.37px;width:113.70px;height:14.37px;background:#ffffff;"></div>
<svg style="position:absolute;left:0;top:0;overflow:visible" width="1" height="1"><text x="125.80" y="289.07" font-family="Liberation Sans" font-size="10.75" font-weight="normal" fill="#1e1e1e" textLength="49.63" lengthAdjust="spacingAndGlyphs">No Balance</text></svg>
<svg style="position:absolute;left:227.2px;top:283.47px" width="5" height="4.5" viewBox="0 0 5 4.5"><path d="M0 0.3 L5 0.3 L2.5 4.3 Z" fill="#111"/></svg>
<div style="position:absolute;left:240.00px;top:278.37px;width:29.20px;height:14.37px;background:#ffffff;"></div>
<div style="position:absolute;left:250.00px;top:279.87px;width:8.10px;height:8.20px;background:linear-gradient(#f2f2f2,#dcdcdc);border:1px solid #b0b0b0;box-sizing:border-box;border-radius:2px;"></div>
<div style="position:absolute;left:272.80px;top:278.37px;width:70.20px;height:14.37px;background:#ffffff;"></div>
<svg style="position:absolute;left:0;top:0;overflow:visible" width="1" height="1"><text x="313.52" y="289.07" font-family="Liberation Sans" font-size="10.75" font-weight="normal" fill="#222" textLength="18.68" lengthAdjust="spacingAndGlyphs">0.00</text></svg>
<div style="position:absolute;left:346.90px;top:278.37px;width:70.00px;height:14.37px;background:#ffffff;"></div>
<svg style="position:absolute;left:0;top:0;overflow:visible" width="1" height="1"><text x="387.72" y="289.07" font-family="Liberation Sans" font-size="10.75" font-weight="normal" fill="#222" textLength="18.68" lengthAdjust="spacingAndGlyphs">0.00</text></svg>
<div style="position:absolute;left:420.60px;top:278.37px;width:30.50px;height:14.37px;background:#ffffff;"></div>
<div style="position:absolute;left:431.30px;top:279.87px;width:8.10px;height:8.20px;background:linear-gradient(#f2f2f2,#dcdcdc);border:1px solid #b0b0b0;box-sizing:border-box;border-radius:2px;"></div>
<div style="position:absolute;left:453.90px;top:278.37px;width:72.20px;height:14.37px;background:#ffffff;"></div>
<svg style="position:absolute;left:0;top:0;overflow:visible" width="1" height="1"><text x="496.62" y="289.07" font-family="Liberation Sans" font-size="10.75" font-weight="normal" fill="#222" textLength="18.68" lengthAdjust="spacingAndGlyphs">0.00</text></svg>
<div style="position:absolute;left:529.40px;top:278.37px;width:71.70px;height:14.37px;background:#ffffff;"></div>
<svg style="position:absolute;left:0;top:0;overflow:visible" width="1" height="1"><text x="571.92" y="289.07" font-family="Liberation Sans" font-size="10.75" font-weight="normal" fill="#222" textLength="18.68" lengthAdjust="spacingAndGlyphs">0.00</text></svg>
<div style="position:absolute;left:604.70px;top:278.37px;width:107.00px;height:14.37px;background:#ffffff;"></div>
<div style="position:absolute;left:613.30px;top:279.87px;width:8.10px;height:8.20px;background:linear-gradient(#f2f2f2,#dcdcdc);border:1px solid #b0b0b0;box-sizing:border-box;border-radius:2px;"><svg width="8.1" height="8.2" viewBox="0 0 8.1 8.2" style="position:absolute;left:-1px;top:-1px"><path d="M1.8 4.1 L3.9 6.0 L6.7 1.9" fill="none" stroke="#2a2a2a" stroke-width="1.8"/></svg></div>
<div style="position:absolute;left:640.40px;top:279.87px;width:8.10px;height:8.20px;background:linear-gradient(#f2f2f2,#dcdcdc);border:1px solid #b0b0b0;box-sizing:border-box;border-radius:2px;"><svg width="8.1" height="8.2" viewBox="0 0 8.1 8.2" style="position:absolute;left:-1px;top:-1px"><path d="M1.8 4.1 L3.9 6.0 L6.7 1.9" fill="none" stroke="#2a2a2a" stroke-width="1.8"/></svg></div>
<div style="position:absolute;left:667.10px;top:279.87px;width:8.10px;height:8.20px;background:linear-gradient(#f2f2f2,#dcdcdc);border:1px solid #b0b0b0;box-sizing:border-box;border-radius:2px;"><svg width="8.1" height="8.2" viewBox="0 0 8.1 8.2" style="position:absolute;left:-1px;top:-1px"><path d="M1.8 4.1 L3.9 6.0 L6.7 1.9" fill="none" stroke="#2a2a2a" stroke-width="1.8"/></svg></div>
<div style="position:absolute;left:693.60px;top:279.87px;width:8.10px;height:8.20px;background:linear-gradient(#f2f2f2,#dcdcdc);border:1px solid #b0b0b0;box-sizing:border-box;border-radius:2px;"><svg width="8.1" height="8.2" viewBox="0 0 8.1 8.2" style="position:absolute;left:-1px;top:-1px"><path d="M1.8 4.1 L3.9 6.0 L6.7 1.9" fill="none" stroke="#2a2a2a" stroke-width="1.8"/></svg></div>
<div style="position:absolute;left:9.00px;top:292.74px;width:11.00px;height:14.37px;background:#dcdcdc;"></div>
<svg style="position:absolute;left:0;top:0;overflow:visible" width="1" height="1"><text x="11.50" y="303.44" font-family="Liberation Sans" font-size="10.75" font-weight="normal" fill="#222" textLength="6.40" lengthAdjust="spacingAndGlyphs">X</text></svg>
<div style="position:absolute;left:20.00px;top:292.74px;width:101.80px;height:14.37px;background:#ebf2fa;"></div>
<svg style="position:absolute;left:110.9px;top:297.84px" width="5" height="4.5" viewBox="0 0 5 4.5"><path d="M0 0.3 L5 0.3 L2.5 4.3 Z" fill="#111"/></svg>
<div style="position:absolute;left:121.80px;top:292.74px;width:1.20px;height:14.37px;background:#b9d8f0;"></div>
<div style="position:absolute;left:123.00px;top:292.74px;width:113.70px;height:14.37px;background:#ebf2fa;"></div>
<svg style="position:absolute;left:0;top:0;overflow:visible" width="1" height="1"><text x="125.80" y="303.44" font-family="Liberation Sans" font-size="10.75" font-weight="normal" fill="#1e1e1e" textLength="49.63" lengthAdjust="spacingAndGlyphs">No Balance</text></svg>
<svg style="position:absolute;left:227.2px;top:297.84px" width="5" height="4.5" viewBox="0 0 5 4.5"><path d="M0 0.3 L5 0.3 L2.5 4.3 Z" fill="#111"/></svg>
<div style="position:absolute;left:240.00px;top:292.74px;width:29.20px;height:14.37px;background:#ebf2fa;"></div>
<div style="position:absolute;left:250.00px;top:294.24px;width:8.10px;height:8.20px;background:linear-gradient(#f2f2f2,#dcdcdc);border:1px solid #b0b0b0;box-sizing:border-box;border-radius:2px;"></div>
<div style="position:absolute;left:272.80px;top:292.74px;width:70.20px;height:14.37px;background:#ebf2fa;"></div>
<svg style="position:absolute;left:0;top:0;overflow:visible" width="1" height="1"><text x="313.52" y="303.44" font-family="Liberation Sans" font-size="10.75" font-weight="normal" fill="#222" textLength="18.68" lengthAdjust="spacingAndGlyphs">0.00</text></svg>
<div style="position:absolute;left:346.90px;top:292.74px;width:70.00px;height:14.37px;background:#ebf2fa;"></div>
<svg style="position:absolute;left:0;top:0;overflow:visible" width="1" height="1"><text x="387.72" y="303.44" font-family="Liberation Sans" font-size="10.75" font-weight="normal" fill="#222" textLength="18.68" lengthAdjust="spacingAndGlyphs">0.00</text></svg>
<div style="position:absolute;left:420.60px;top:292.74px;width:30.50px;height:14.37px;background:#ebf2fa;"></div>
<div style="position:absolute;left:431.30px;top:294.24px;width:8.10px;height:8.20px;background:linear-gradient(#f2f2f2,#dcdcdc);border:1px solid #b0b0b0;box-sizing:border-box;border-radius:2px;"></div>
<div style="position:absolute;left:453.90px;top:292.74px;width:72.20px;height:14.37px;background:#ebf2fa;"></div>
<svg style="position:absolute;left:0;top:0;overflow:visible" width="1" height="1"><text x="496.62" y="303.44" font-family="Liberation Sans" font-size="10.75" font-weight="normal" fill="#222" textLength="18.68" lengthAdjust="spacingAndGlyphs">0.00</text></svg>
<div style="position:absolute;left:529.40px;top:292.74px;width:71.70px;height:14.37px;background:#ebf2fa;"></div>
<svg style="position:absolute;left:0;top:0;overflow:visible" width="1" height="1"><text x="571.92" y="303.44" font-family="Liberation Sans" font-size="10.75" font-weight="normal" fill="#222" textLength="18.68" lengthAdjust="spacingAndGlyphs">0.00</text></svg>
<div style="position:absolute;left:604.70px;top:292.74px;width:107.00px;height:14.37px;background:#ebf2fa;"></div>
<div style="position:absolute;left:613.30px;top:294.24px;width:8.10px;height:8.20px;background:linear-gradient(#f2f2f2,#dcdcdc);border:1px solid #b0b0b0;box-sizing:border-box;border-radius:2px;"><svg width="8.1" height="8.2" viewBox="0 0 8.1 8.2" style="position:absolute;left:-1px;top:-1px"><path d="M1.8 4.1 L3.9 6.0 L6.7 1.9" fill="none" stroke="#2a2a2a" stroke-width="1.8"/></svg></div>
<div style="position:absolute;left:640.40px;top:294.24px;width:8.10px;height:8.20px;background:linear-gradient(#f2f2f2,#dcdcdc);border:1px solid #b0b0b0;box-sizing:border-box;border-radius:2px;"><svg width="8.1" height="8.2" viewBox="0 0 8.1 8.2" style="position:absolute;left:-1px;top:-1px"><path d="M1.8 4.1 L3.9 6.0 L6.7 1.9" fill="none" stroke="#2a2a2a" stroke-width="1.8"/></svg></div>
<div style="position:absolute;left:667.10px;top:294.24px;width:8.10px;height:8.20px;background:linear-gradient(#f2f2f2,#dcdcdc);border:1px solid #b0b0b0;box-sizing:border-box;border-radius:2px;"><svg width="8.1" height="8.2" viewBox="0 0 8.1 8.2" style="position:absolute;left:-1px;top:-1px"><path d="M1.8 4.1 L3.9 6.0 L6.7 1.9" fill="none" stroke="#2a2a2a" stroke-width="1.8"/></svg></div>
<div style="position:absolute;left:693.60px;top:294.24px;width:8.10px;height:8.20px;background:linear-gradient(#f2f2f2,#dcdcdc);border:1px solid #b0b0b0;box-sizing:border-box;border-radius:2px;"><svg width="8.1" height="8.2" viewBox="0 0 8.1 8.2" style="position:absolute;left:-1px;top:-1px"><path d="M1.8 4.1 L3.9 6.0 L6.7 1.9" fill="none" stroke="#2a2a2a" stroke-width="1.8"/></svg></div>
<div style="position:absolute;left:9.00px;top:307.11px;width:11.00px;height:14.37px;background:#dcdcdc;"></div>
<svg style="position:absolute;left:0;top:0;overflow:visible" width="1" height="1"><text x="11.50" y="317.81" font-family="Liberation Sans" font-size="10.75" font-weight="normal" fill="#222" textLength="6.40" lengthAdjust="spacingAndGlyphs">X</text></svg>
<div style="position:absolute;left:20.00px;top:307.11px;width:101.80px;height:14.37px;background:#ffffff;"></div>
<svg style="position:absolute;left:110.9px;top:312.21px" width="5" height="4.5" viewBox="0 0 5 4.5"><path d="M0 0.3 L5 0.3 L2.5 4.3 Z" fill="#111"/></svg>
<div style="position:absolute;left:121.80px;top:307.11px;width:1.20px;height:14.37px;background:#b9d8f0;"></div>
<div style="position:absolute;left:123.00px;top:307.11px;width:113.70px;height:14.37px;background:#ffffff;"></div>
<svg style="position:absolute;left:0;top:0;overflow:visible" width="1" height="1"><text x="125.80" y="317.81" font-family="Liberation Sans" font-size="10.75" font-weight="normal" fill="#1e1e1e" textLength="49.63" lengthAdjust="spacingAndGlyphs">No Balance</text></svg>
<svg style="position:absolute;left:227.2px;top:312.21px" width="5" height="4.5" viewBox="0 0 5 4.5"><path d="M0 0.3 L5 0.3 L2.5 4.3 Z" fill="#111"/></svg>
<div style="position:absolute;left:240.00px;top:307.11px;width:29.20px;height:14.37px;background:#ffffff;"></div>
<div style="position:absolute;left:250.00px;top:308.61px;width:8.10px;height:8.20px;background:linear-gradient(#f2f2f2,#dcdcdc);border:1px solid #b0b0b0;box-sizing:border-box;border-radius:2px;"></div>
<div style="position:absolute;left:272.80px;top:307.11px;width:70.20px;height:14.37px;background:#ffffff;"></div>
<svg style="position:absolute;left:0;top:0;overflow:visible" width="1" height="1"><text x="313.52" y="317.81" font-family="Liberation Sans" font-size="10.75" font-weight="normal" fill="#222" textLength="18.68" lengthAdjust="spacingAndGlyphs">0.00</text></svg>
<div style="position:absolute;left:346.90px;top:307.11px;width:70.00px;height:14.37px;background:#ffffff;"></div>
<svg style="position:absolute;left:0;top:0;overflow:visible" width="1" height="1"><text x="387.72" y="317.81" font-family="Liberation Sans" font-size="10.75" font-weight="normal" fill="#222" textLength="18.68" lengthAdjust="spacingAndGlyphs">0.00</text></svg>
<div style="position:absolute;left:420.60px;top:307.11px;width:30.50px;height:14.37px;background:#ffffff;"></div>
<div style="position:absolute;left:431.30px;top:308.61px;width:8.10px;height:8.20px;background:linear-gradient(#f2f2f2,#dcdcdc);border:1px solid #b0b0b0;box-sizing:border-box;border-radius:2px;"></div>
<div style="position:absolute;left:453.90px;top:307.11px;width:72.20px;height:14.37px;background:#ffffff;"></div>
<svg style="position:absolute;left:0;top:0;overflow:visible" width="1" height="1"><text x="496.62" y="317.81" font-family="Liberation Sans" font-size="10.75" font-weight="normal" fill="#222" textLength="18.68" lengthAdjust="spacingAndGlyphs">0.00</text></svg>
<div style="position:absolute;left:529.40px;top:307.11px;width:71.70px;height:14.37px;background:#ffffff;"></div>
<svg style="position:absolute;left:0;top:0;overflow:visible" width="1" height="1"><text x="571.92" y="317.81" font-family="Liberation Sans" font-size="10.75" font-weight="normal" fill="#222" textLength="18.68" lengthAdjust="spacingAndGlyphs">0.00</text></svg>
<div style="position:absolute;left:604.70px;top:307.11px;width:107.00px;height:14.37px;background:#ffffff;"></div>
<div style="position:absolute;left:613.30px;top:308.61px;width:8.10px;height:8.20px;background:linear-gradient(#f2f2f2,#dcdcdc);border:1px solid #b0b0b0;box-sizing:border-box;border-radius:2px;"><svg width="8.1" height="8.2" viewBox="0 0 8.1 8.2" style="position:absolute;left:-1px;top:-1px"><path d="M1.8 4.1 L3.9 6.0 L6.7 1.9" fill="none" stroke="#2a2a2a" stroke-width="1.8"/></svg></div>
<div style="position:absolute;left:640.40px;top:308.61px;width:8.10px;height:8.20px;background:linear-gradient(#f2f2f2,#dcdcdc);border:1px solid #b0b0b0;box-sizing:border-box;border-radius:2px;"><svg width="8.1" height="8.2" viewBox="0 0 8.1 8.2" style="position:absolute;left:-1px;top:-1px"><path d="M1.8 4.1 L3.9 6.0 L6.7 1.9" fill="none" stroke="#2a2a2a" stroke-width="1.8"/></svg></div>
<div style="position:absolute;left:667.10px;top:308.61px;width:8.10px;height:8.20px;background:linear-gradient(#f2f2f2,#dcdcdc);border:1px solid #b0b0b0;box-sizing:border-box;border-radius:2px;"><svg width="8.1" height="8.2" viewBox="0 0 8.1 8.2" style="position:absolute;left:-1px;top:-1px"><path d="M1.8 4.1 L3.9 6.0 L6.7 1.9" fill="none" stroke="#2a2a2a" stroke-width="1.8"/></svg></div>
<div style="position:absolute;left:693.60px;top:308.61px;width:8.10px;height:8.20px;background:linear-gradient(#f2f2f2,#dcdcdc);border:1px solid #b0b0b0;box-sizing:border-box;border-radius:2px;"><svg width="8.1" height="8.2" viewBox="0 0 8.1 8.2" style="position:absolute;left:-1px;top:-1px"><path d="M1.8 4.1 L3.9 6.0 L6.7 1.9" fill="none" stroke="#2a2a2a" stroke-width="1.8"/></svg></div>
<div style="position:absolute;left:9.00px;top:321.48px;width:11.00px;height:14.37px;background:#dcdcdc;"></div>
<svg style="position:absolute;left:0;top:0;overflow:visible" width="1" height="1"><text x="11.50" y="332.18" font-family="Liberation Sans" font-size="10.75" font-weight="normal" fill="#222" textLength="6.40" lengthAdjust="spacingAndGlyphs">X</text></svg>
<div style="position:absolute;left:20.00px;top:321.48px;width:101.80px;height:14.37px;background:#ebf2fa;"></div>
<svg style="position:absolute;left:110.9px;top:326.58px" width="5" height="4.5" viewBox="0 0 5 4.5"><path d="M0 0.3 L5 0.3 L2.5 4.3 Z" fill="#111"/></svg>
<div style="position:absolute;left:121.80px;top:321.48px;width:1.20px;height:14.37px;background:#b9d8f0;"></div>
<div style="position:absolute;left:123.00px;top:321.48px;width:113.70px;height:14.37px;background:#ebf2fa;"></div>
<svg style="position:absolute;left:0;top:0;overflow:visible" width="1" height="1"><text x="125.80" y="332.18" font-family="Liberation Sans" font-size="10.75" font-weight="normal" fill="#1e1e1e" textLength="49.63" lengthAdjust="spacingAndGlyphs">No Balance</text></svg>
<svg style="position:absolute;left:227.2px;top:326.58px" width="5" height="4.5" viewBox="0 0 5 4.5"><path d="M0 0.3 L5 0.3 L2.5 4.3 Z" fill="#111"/></svg>
<div style="position:absolute;left:240.00px;top:321.48px;width:29.20px;height:14.37px;background:#ebf2fa;"></div>
<div style="position:absolute;left:250.00px;top:322.98px;width:8.10px;height:8.20px;background:linear-gradient(#f2f2f2,#dcdcdc);border:1px solid #b0b0b0;box-sizing:border-box;border-radius:2px;"></div>
<div style="position:absolute;left:272.80px;top:321.48px;width:70.20px;height:14.37px;background:#ebf2fa;"></div>
<svg style="position:absolute;left:0;top:0;overflow:visible" width="1" height="1"><text x="313.52" y="332.18" font-family="Liberation Sans" font-size="10.75" font-weight="normal" fill="#222" textLength="18.68" lengthAdjust="spacingAndGlyphs">0.00</text></svg>
<div style="position:absolute;left:346.90px;top:321.48px;width:70.00px;height:14.37px;background:#ebf2fa;"></div>
<svg style="position:absolute;left:0;top:0;overflow:visible" width="1" height="1"><text x="387.72" y="332.18" font-family="Liberation Sans" font-size="10.75" font-weight="normal" fill="#222" textLength="18.68" lengthAdjust="spacingAndGlyphs">0.00</text></svg>
<div style="position:absolute;left:420.60px;top:321.48px;width:30.50px;height:14.37px;background:#ebf2fa;"></div>
<div style="position:absolute;left:431.30px;top:322.98px;width:8.10px;height:8.20px;background:linear-gradient(#f2f2f2,#dcdcdc);border:1px solid #b0b0b0;box-sizing:border-box;border-radius:2px;"></div>
<div style="position:absolute;left:453.90px;top:321.48px;width:72.20px;height:14.37px;background:#ebf2fa;"></div>
<svg style="position:absolute;left:0;top:0;overflow:visible" width="1" height="1"><text x="496.62" y="332.18" font-family="Liberation Sans" font-size="10.75" font-weight="normal" fill="#222" textLength="18.68" lengthAdjust="spacingAndGlyphs">0.00</text></svg>
<div style="position:absolute;left:529.40px;top:321.48px;width:71.70px;height:14.37px;background:#ebf2fa;"></div>
<svg style="position:absolute;left:0;top:0;overflow:visible" width="1" height="1"><text x="571.92" y="332.18" font-family="Liberation Sans" font-size="10.75" font-weight="normal" fill="#222" textLength="18.68" lengthAdjust="spacingAndGlyphs">0.00</text></svg>
<div style="position:absolute;left:604.70px;top:321.48px;width:107.00px;height:14.37px;background:#ebf2fa;"></div>
<div style="position:absolute;left:613.30px;top:322.98px;width:8.10px;height:8.20px;background:linear-gradient(#f2f2f2,#dcdcdc);border:1px solid #b0b0b0;box-sizing:border-box;border-radius:2px;"><svg width="8.1" height="8.2" viewBox="0 0 8.1 8.2" style="position:absolute;left:-1px;top:-1px"><path d="M1.8 4.1 L3.9 6.0 L6.7 1.9" fill="none" stroke="#2a2a2a" stroke-width="1.8"/></svg></div>
<div style="position:absolute;left:640.40px;top:322.98px;width:8.10px;height:8.20px;background:linear-gradient(#f2f2f2,#dcdcdc);border:1px solid #b0b0b0;box-sizing:border-box;border-radius:2px;"><svg width="8.1" height="8.2" viewBox="0 0 8.1 8.2" style="position:absolute;left:-1px;top:-1px"><path d="M1.8 4.1 L3.9 6.0 L6.7 1.9" fill="none" stroke="#2a2a2a" stroke-width="1.8"/></svg></div>
<div style="position:absolute;left:667.10px;top:322.98px;width:8.10px;height:8.20px;background:linear-gradient(#f2f2f2,#dcdcdc);border:1px solid #b0b0b0;box-sizing:border-box;border-radius:2px;"><svg width="8.1" height="8.2" viewBox="0 0 8.1 8.2" style="position:absolute;left:-1px;top:-1px"><path d="M1.8 4.1 L3.9 6.0 L6.7 1.9" fill="none" stroke="#2a2a2a" stroke-width="1.8"/></svg></div>
<div style="position:absolute;left:693.60px;top:322.98px;width:8.10px;height:8.20px;background:linear-gradient(#f2f2f2,#dcdcdc);border:1px solid #b0b0b0;box-sizing:border-box;border-radius:2px;"><svg width="8.1" height="8.2" viewBox="0 0 8.1 8.2" style="position:absolute;left:-1px;top:-1px"><path d="M1.8 4.1 L3.9 6.0 L6.7 1.9" fill="none" stroke="#2a2a2a" stroke-width="1.8"/></svg></div>
<div style="position:absolute;left:9.00px;top:335.85px;width:11.00px;height:14.37px;background:#dcdcdc;"></div>
<svg style="position:absolute;left:0;top:0;overflow:visible" width="1" height="1"><text x="11.50" y="346.55" font-family="Liberation Sans" font-size="10.75" font-weight="normal" fill="#222" textLength="6.40" lengthAdjust="spacingAndGlyphs">X</text></svg>
<div style="position:absolute;left:20.00px;top:335.85px;width:101.80px;height:14.37px;background:#ffffff;"></div>
<svg style="position:absolute;left:110.9px;top:340.95px" width="5" height="4.5" viewBox="0 0 5 4.5"><path d="M0 0.3 L5 0.3 L2.5 4.3 Z" fill="#111"/></svg>
<div style="position:absolute;left:121.80px;top:335.85px;width:1.20px;height:14.37px;background:#b9d8f0;"></div>
<div style="position:absolute;left:123.00px;top:335.85px;width:113.70px;height:14.37px;background:#ffffff;"></div>
<svg style="position:absolute;left:0;top:0;overflow:visible" width="1" height="1"><text x="125.80" y="346.55" font-family="Liberation Sans" font-size="10.75" font-weight="normal" fill="#1e1e1e" textLength="49.63" lengthAdjust="spacingAndGlyphs">No Balance</text></svg>
<svg style="position:absolute;left:227.2px;top:340.95px" width="5" height="4.5" viewBox="0 0 5 4.5"><path d="M0 0.3 L5 0.3 L2.5 4.3 Z" fill="#111"/></svg>
<div style="position:absolute;left:240.00px;top:335.85px;width:29.20px;height:14.37px;background:#ffffff;"></div>
<div style="position:absolute;left:250.00px;top:337.35px;width:8.10px;height:8.20px;background:linear-gradient(#f2f2f2,#dcdcdc);border:1px solid #b0b0b0;box-sizing:border-box;border-radius:2px;"></div>
<div style="position:absolute;left:272.80px;top:335.85px;width:70.20px;height:14.37px;background:#ffffff;"></div>
<svg style="position:absolute;left:0;top:0;overflow:visible" width="1" height="1"><text x="313.52" y="346.55" font-family="Liberation Sans" font-size="10.75" font-weight="normal" fill="#222" textLength="18.68" lengthAdjust="spacingAndGlyphs">0.00</text></svg>
<div style="position:absolute;left:346.90px;top:335.85px;width:70.00px;height:14.37px;background:#ffffff;"></div>
<svg style="position:absolute;left:0;top:0;overflow:visible" width="1" height="1"><text x="387.72" y="346.55" font-family="Liberation Sans" font-size="10.75" font-weight="normal" fill="#222" textLength="18.68" lengthAdjust="spacingAndGlyphs">0.00</text></svg>
<div style="position:absolute;left:420.60px;top:335.85px;width:30.50px;height:14.37px;background:#ffffff;"></div>
<div style="position:absolute;left:431.30px;top:337.35px;width:8.10px;height:8.20px;background:linear-gradient(#f2f2f2,#dcdcdc);border:1px solid #b0b0b0;box-sizing:border-box;border-radius:2px;"></div>
<div style="position:absolute;left:453.90px;top:335.85px;width:72.20px;height:14.37px;background:#ffffff;"></div>
<svg style="position:absolute;left:0;top:0;overflow:visible" width="1" height="1"><text x="496.62" y="346.55" font-family="Liberation Sans" font-size="10.75" font-weight="normal" fill="#222" textLength="18.68" lengthAdjust="spacingAndGlyphs">0.00</text></svg>
<div style="position:absolute;left:529.40px;top:335.85px;width:71.70px;height:14.37px;background:#ffffff;"></div>
<svg style="position:absolute;left:0;top:0;overflow:visible" width="1" height="1"><text x="571.92" y="346.55" font-family="Liberation Sans" font-size="10.75" font-weight="normal" fill="#222" textLength="18.68" lengthAdjust="spacingAndGlyphs">0.00</text></svg>
<div style="position:absolute;left:604.70px;top:335.85px;width:107.00px;height:14.37px;background:#ffffff;"></div>
<div style="position:absolute;left:613.30px;top:337.35px;width:8.10px;height:8.20px;background:linear-gradient(#f2f2f2,#dcdcdc);border:1px solid #b0b0b0;box-sizing:border-box;border-radius:2px;"><svg width="8.1" height="8.2" viewBox="0 0 8.1 8.2" style="position:absolute;left:-1px;top:-1px"><path d="M1.8 4.1 L3.9 6.0 L6.7 1.9" fill="none" stroke="#2a2a2a" stroke-width="1.8"/></svg></div>
<div style="position:absolute;left:640.40px;top:337.35px;width:8.10px;height:8.20px;background:linear-gradient(#f2f2f2,#dcdcdc);border:1px solid #b0b0b0;box-sizing:border-box;border-radius:2px;"><svg width="8.1" height="8.2" viewBox="0 0 8.1 8.2" style="position:absolute;left:-1px;top:-1px"><path d="M1.8 4.1 L3.9 6.0 L6.7 1.9" fill="none" stroke="#2a2a2a" stroke-width="1.8"/></svg></div>
<div style="position:absolute;left:667.10px;top:337.35px;width:8.10px;height:8.20px;background:linear-gradient(#f2f2f2,#dcdcdc);border:1px solid #b0b0b0;box-sizing:border-box;border-radius:2px;"><svg width="8.1" height="8.2" viewBox="0 0 8.1 8.2" style="position:absolute;left:-1px;top:-1px"><path d="M1.8 4.1 L3.9 6.0 L6.7 1.9" fill="none" stroke="#2a2a2a" stroke-width="1.8"/></svg></div>
<div style="position:absolute;left:693.60px;top:337.35px;width:8.10px;height:8.20px;background:linear-gradient(#f2f2f2,#dcdcdc);border:1px solid #b0b0b0;box-sizing:border-box;border-radius:2px;"><svg width="8.1" height="8.2" viewBox="0 0 8.1 8.2" style="position:absolute;left:-1px;top:-1px"><path d="M1.8 4.1 L3.9 6.0 L6.7 1.9" fill="none" stroke="#2a2a2a" stroke-width="1.8"/></svg></div>
<div style="position:absolute;left:9.00px;top:350.22px;width:11.00px;height:14.37px;background:#dcdcdc;"></div>
<svg style="position:absolute;left:0;top:0;overflow:visible" width="1" height="1"><text x="11.50" y="360.92" font-family="Liberation Sans" font-size="10.75" font-weight="normal" fill="#222" textLength="6.40" lengthAdjust="spacingAndGlyphs">X</text></svg>
<div style="position:absolute;left:20.00px;top:350.22px;width:101.80px;height:14.37px;background:#ebf2fa;"></div>
<svg style="position:absolute;left:110.9px;top:355.32px" width="5" height="4.5" viewBox="0 0 5 4.5"><path d="M0 0.3 L5 0.3 L2.5 4.3 Z" fill="#111"/></svg>
<div style="position:absolute;left:121.80px;top:350.22px;width:1.20px;height:14.37px;background:#b9d8f0;"></div>
<div style="position:absolute;left:123.00px;top:350.22px;width:113.70px;height:14.37px;background:#ebf2fa;"></div>
<svg style="position:absolute;left:0;top:0;overflow:visible" width="1" height="1"><text x="125.80" y="360.92" font-family="Liberation Sans" font-size="10.75" font-weight="normal" fill="#1e1e1e" textLength="49.63" lengthAdjust="spacingAndGlyphs">No Balance</text></svg>
<svg style="position:absolute;left:227.2px;top:355.32px" width="5" height="4.5" viewBox="0 0 5 4.5"><path d="M0 0.3 L5 0.3 L2.5 4.3 Z" fill="#111"/></svg>
<div style="position:absolute;left:240.00px;top:350.22px;width:29.20px;height:14.37px;background:#ebf2fa;"></div>
<div style="position:absolute;left:250.00px;top:351.72px;width:8.10px;height:8.20px;background:linear-gradient(#f2f2f2,#dcdcdc);border:1px solid #b0b0b0;box-sizing:border-box;border-radius:2px;"></div>
<div style="position:absolute;left:272.80px;top:350.22px;width:70.20px;height:14.37px;background:#ebf2fa;"></div>
<svg style="position:absolute;left:0;top:0;overflow:visible" width="1" height="1"><text x="313.52" y="360.92" font-family="Liberation Sans" font-size="10.75" font-weight="normal" fill="#222" textLength="18.68" lengthAdjust="spacingAndGlyphs">0.00</text></svg>
<div style="position:absolute;left:346.90px;top:350.22px;width:70.00px;height:14.37px;background:#ebf2fa;"></div>
<svg style="position:absolute;left:0;top:0;overflow:visible" width="1" height="1"><text x="387.72" y="360.92" font-family="Liberation Sans" font-size="10.75" font-weight="normal" fill="#222" textLength="18.68" lengthAdjust="spacingAndGlyphs">0.00</text></svg>
<div style="position:absolute;left:420.60px;top:350.22px;width:30.50px;height:14.37px;background:#ebf2fa;"></div>
<div style="position:absolute;left:431.30px;top:351.72px;width:8.10px;height:8.20px;background:linear-gradient(#f2f2f2,#dcdcdc);border:1px solid #b0b0b0;box-sizing:border-box;border-radius:2px;"></div>
<div style="position:absolute;left:453.90px;top:350.22px;width:72.20px;height:14.37px;background:#ebf2fa;"></div>
<svg style="position:absolute;left:0;top:0;overflow:visible" width="1" height="1"><text x="496.62" y="360.92" font-family="Liberation Sans" font-size="10.75" font-weight="normal" fill="#222" textLength="18.68" lengthAdjust="spacingAndGlyphs">0.00</text></svg>
<div style="position:absolute;left:529.40px;top:350.22px;width:71.70px;height:14.37px;background:#ebf2fa;"></div>
<svg style="position:absolute;left:0;top:0;overflow:visible" width="1" height="1"><text x="571.92" y="360.92" font-family="Liberation Sans" font-size="10.75" font-weight="normal" fill="#222" textLength="18.68" lengthAdjust="spacingAndGlyphs">0.00</text></svg>
<div style="position:absolute;left:604.70px;top:350.22px;width:107.00px;height:14.37px;background:#ebf2fa;"></div>
<div style="position:absolute;left:613.30px;top:351.72px;width:8.10px;height:8.20px;background:linear-gradient(#f2f2f2,#dcdcdc);border:1px solid #b0b0b0;box-sizing:border-box;border-radius:2px;"><svg width="8.1" height="8.2" viewBox="0 0 8.1 8.2" style="position:absolute;left:-1px;top:-1px"><path d="M1.8 4.1 L3.9 6.0 L6.7 1.9" fill="none" stroke="#2a2a2a" stroke-width="1.8"/></svg></div>
<div style="position:absolute;left:640.40px;top:351.72px;width:8.10px;height:8.20px;background:linear-gradient(#f2f2f2,#dcdcdc);border:1px solid #b0b0b0;box-sizing:border-box;border-radius:2px;"><svg width="8.1" height="8.2" viewBox="0 0 8.1 8.2" style="position:absolute;left:-1px;top:-1px"><path d="M1.8 4.1 L3.9 6.0 L6.7 1.9" fill="none" stroke="#2a2a2a" stroke-width="1.8"/></svg></div>
<div style="position:absolute;left:667.10px;top:351.72px;width:8.10px;height:8.20px;background:linear-gradient(#f2f2f2,#dcdcdc);border:1px solid #b0b0b0;box-sizing:border-box;border-radius:2px;"><svg width="8.1" height="8.2" viewBox="0 0 8.1 8.2" style="position:absolute;left:-1px;top:-1px"><path d="M1.8 4.1 L3.9 6.0 L6.7 1.9" fill="none" stroke="#2a2a2a" stroke-width="1.8"/></svg></div>
<div style="position:absolute;left:693.60px;top:351.72px;width:8.10px;height:8.20px;background:linear-gradient(#f2f2f2,#dcdcdc);border:1px solid #b0b0b0;box-sizing:border-box;border-radius:2px;"><svg width="8.1" height="8.2" viewBox="0 0 8.1 8.2" style="position:absolute;left:-1px;top:-1px"><path d="M1.8 4.1 L3.9 6.0 L6.7 1.9" fill="none" stroke="#2a2a2a" stroke-width="1.8"/></svg></div>
<div style="position:absolute;left:9.00px;top:364.59px;width:11.00px;height:14.37px;background:#dcdcdc;"></div>
<svg style="position:absolute;left:0;top:0;overflow:visible" width="1" height="1"><text x="11.50" y="375.29" font-family="Liberation Sans" font-size="10.75" font-weight="normal" fill="#222" textLength="6.40" lengthAdjust="spacingAndGlyphs">X</text></svg>
<div style="position:absolute;left:20.00px;top:364.59px;width:101.80px;height:14.37px;background:#ffffff;"></div>
<svg style="position:absolute;left:110.9px;top:369.69px" width="5" height="4.5" viewBox="0 0 5 4.5"><path d="M0 0.3 L5 0.3 L2.5 4.3 Z" fill="#111"/></svg>
<div style="position:absolute;left:121.80px;top:364.59px;width:1.20px;height:14.37px;background:#b9d8f0;"></div>
<div style="position:absolute;left:123.00px;top:364.59px;width:113.70px;height:14.37px;background:#ffffff;"></div>
<svg style="position:absolute;left:0;top:0;overflow:visible" width="1" height="1"><text x="125.80" y="375.29" font-family="Liberation Sans" font-size="10.75" font-weight="normal" fill="#1e1e1e" textLength="49.63" lengthAdjust="spacingAndGlyphs">No Balance</text></svg>
<svg style="position:absolute;left:227.2px;top:369.69px" width="5" height="4.5" viewBox="0 0 5 4.5"><path d="M0 0.3 L5 0.3 L2.5 4.3 Z" fill="#111"/></svg>
<div style="position:absolute;left:240.00px;top:364.59px;width:29.20px;height:14.37px;background:#ffffff;"></div>
<div style="position:absolute;left:250.00px;top:366.09px;width:8.10px;height:8.20px;background:linear-gradient(#f2f2f2,#dcdcdc);border:1px solid #b0b0b0;box-sizing:border-box;border-radius:2px;"></div>
<div style="position:absolute;left:272.80px;top:364.59px;width:70.20px;height:14.37px;background:#ffffff;"></div>
<svg style="position:absolute;left:0;top:0;overflow:visible" width="1" height="1"><text x="313.52" y="375.29" font-family="Liberation Sans" font-size="10.75" font-weight="normal" fill="#222" textLength="18.68" lengthAdjust="spacingAndGlyphs">0.00</text></svg>
<div style="position:absolute;left:346.90px;top:364.59px;width:70.00px;height:14.37px;background:#ffffff;"></div>
<svg style="position:absolute;left:0;top:0;overflow:visible" width="1" height="1"><text x="387.72" y="375.29" font-family="Liberation Sans" font-size="10.75" font-weight="normal" fill="#222" textLength="18.68" lengthAdjust="spacingAndGlyphs">0.00</text></svg>
<div style="position:absolute;left:420.60px;top:364.59px;width:30.50px;height:14.37px;background:#ffffff;"></div>
<div style="position:absolute;left:431.30px;top:366.09px;width:8.10px;height:8.20px;background:linear-gradient(#f2f2f2,#dcdcdc);border:1px solid #b0b0b0;box-sizing:border-box;border-radius:2px;"></div>
<div style="position:absolute;left:453.90px;top:364.59px;width:72.20px;height:14.37px;background:#ffffff;"></div>
<svg style="position:absolute;left:0;top:0;overflow:visible" width="1" height="1"><text x="496.62" y="375.29" font-family="Liberation Sans" font-size="10.75" font-weight="normal" fill="#222" textLength="18.68" lengthAdjust="spacingAndGlyphs">0.00</text></svg>
<div style="position:absolute;left:529.40px;top:364.59px;width:71.70px;height:14.37px;background:#ffffff;"></div>
<svg style="position:absolute;left:0;top:0;overflow:visible" width="1" height="1"><text x="571.92" y="375.29" font-family="Liberation Sans" font-size="10.75" font-weight="normal" fill="#222" textLength="18.68" lengthAdjust="spacingAndGlyphs">0.00</text></svg>
<div style="position:absolute;left:604.70px;top:364.59px;width:107.00px;height:14.37px;background:#ffffff;"></div>
<div style="position:absolute;left:613.30px;top:366.09px;width:8.10px;height:8.20px;background:linear-gradient(#f2f2f2,#dcdcdc);border:1px solid #b0b0b0;box-sizing:border-box;border-radius:2px;"><svg width="8.1" height="8.2" viewBox="0 0 8.1 8.2" style="position:absolute;left:-1px;top:-1px"><path d="M1.8 4.1 L3.9 6.0 L6.7 1.9" fill="none" stroke="#2a2a2a" stroke-width="1.8"/></svg></div>
<div style="position:absolute;left:640.40px;top:366.09px;width:8.10px;height:8.20px;background:linear-gradient(#f2f2f2,#dcdcdc);border:1px solid #b0b0b0;box-sizing:border-box;border-radius:2px;"><svg width="8.1" height="8.2" viewBox="0 0 8.1 8.2" style="position:absolute;left:-1px;top:-1px"><path d="M1.8 4.1 L3.9 6.0 L6.7 1.9" fill="none" stroke="#2a2a2a" stroke-width="1.8"/></svg></div>
<div style="position:absolute;left:667.10px;top:366.09px;width:8.10px;height:8.20px;background:linear-gradient(#f2f2f2,#dcdcdc);border:1px solid #b0b0b0;box-sizing:border-box;border-radius:2px;"><svg width="8.1" height="8.2" viewBox="0 0 8.1 8.2" style="position:absolute;left:-1px;top:-1px"><path d="M1.8 4.1 L3.9 6.0 L6.7 1.9" fill="none" stroke="#2a2a2a" stroke-width="1.8"/></svg></div>
<div style="position:absolute;left:693.60px;top:366.09px;width:8.10px;height:8.20px;background:linear-gradient(#f2f2f2,#dcdcdc);border:1px solid #b0b0b0;box-sizing:border-box;border-radius:2px;"><svg width="8.1" height="8.2" viewBox="0 0 8.1 8.2" style="position:absolute;left:-1px;top:-1px"><path d="M1.8 4.1 L3.9 6.0 L6.7 1.9" fill="none" stroke="#2a2a2a" stroke-width="1.8"/></svg></div>
<div style="position:absolute;left:9.00px;top:378.96px;width:11.00px;height:14.37px;background:#dcdcdc;"></div>
<svg style="position:absolute;left:0;top:0;overflow:visible" width="1" height="1"><text x="11.50" y="389.66" font-family="Liberation Sans" font-size="10.75" font-weight="normal" fill="#222" textLength="6.40" lengthAdjust="spacingAndGlyphs">X</text></svg>
<div style="position:absolute;left:20.00px;top:378.96px;width:101.80px;height:14.37px;background:#ebf2fa;"></div>
<svg style="position:absolute;left:110.9px;top:384.06px" width="5" height="4.5" viewBox="0 0 5 4.5"><path d="M0 0.3 L5 0.3 L2.5 4.3 Z" fill="#111"/></svg>
<div style="position:absolute;left:121.80px;top:378.96px;width:1.20px;height:14.37px;background:#b9d8f0;"></div>
<div style="position:absolute;left:123.00px;top:378.96px;width:113.70px;height:14.37px;background:#ebf2fa;"></div>
<svg style="position:absolute;left:0;top:0;overflow:visible" width="1" height="1"><text x="125.80" y="389.66" font-family="Liberation Sans" font-size="10.75" font-weight="normal" fill="#1e1e1e" textLength="49.63" lengthAdjust="spacingAndGlyphs">No Balance</text></svg>
<svg style="position:absolute;left:227.2px;top:384.06px" width="5" height="4.5" viewBox="0 0 5 4.5"><path d="M0 0.3 L5 0.3 L2.5 4.3 Z" fill="#111"/></svg>
<div style="position:absolute;left:240.00px;top:378.96px;width:29.20px;height:14.37px;background:#ebf2fa;"></div>
<div style="position:absolute;left:250.00px;top:380.46px;width:8.10px;height:8.20px;background:linear-gradient(#f2f2f2,#dcdcdc);border:1px solid #b0b0b0;box-sizing:border-box;border-radius:2px;"></div>
<div style="position:absolute;left:272.80px;top:378.96px;width:70.20px;height:14.37px;background:#ebf2fa;"></div>
<svg style="position:absolute;left:0;top:0;overflow:visible" width="1" height="1"><text x="313.52" y="389.66" font-family="Liberation Sans" font-size="10.75" font-weight="normal" fill="#222" textLength="18.68" lengthAdjust="spacingAndGlyphs">0.00</text></svg>
<div style="position:absolute;left:346.90px;top:378.96px;width:70.00px;height:14.37px;background:#ebf2fa;"></div>
<svg style="position:absolute;left:0;top:0;overflow:visible" width="1" height="1"><text x="387.72" y="389.66" font-family="Liberation Sans" font-size="10.75" font-weight="normal" fill="#222" textLength="18.68" lengthAdjust="spacingAndGlyphs">0.00</text></svg>
<div style="position:absolute;left:420.60px;top:378.96px;width:30.50px;height:14.37px;background:#ebf2fa;"></div>
<div style="position:absolute;left:431.30px;top:380.46px;width:8.10px;height:8.20px;background:linear-gradient(#f2f2f2,#dcdcdc);border:1px solid #b0b0b0;box-sizing:border-box;border-radius:2px;"></div>
<div style="position:absolute;left:453.90px;top:378.96px;width:72.20px;height:14.37px;background:#ebf2fa;"></div>
<svg style="position:absolute;left:0;top:0;overflow:visible" width="1" height="1"><text x="496.62" y="389.66" font-family="Liberation Sans" font-size="10.75" font-weight="normal" fill="#222" textLength="18.68" lengthAdjust="spacingAndGlyphs">0.00</text></svg>
<div style="position:absolute;left:529.40px;top:378.96px;width:71.70px;height:14.37px;background:#ebf2fa;"></div>
<svg style="position:absolute;left:0;top:0;overflow:visible" width="1" height="1"><text x="571.92" y="389.66" font-family="Liberation Sans" font-size="10.75" font-weight="normal" fill="#222" textLength="18.68" lengthAdjust="spacingAndGlyphs">0.00</text></svg>
<div style="position:absolute;left:604.70px;top:378.96px;width:107.00px;height:14.37px;background:#ebf2fa;"></div>
<div style="position:absolute;left:613.30px;top:380.46px;width:8.10px;height:8.20px;background:linear-gradient(#f2f2f2,#dcdcdc);border:1px solid #b0b0b0;box-sizing:border-box;border-radius:2px;"><svg width="8.1" height="8.2" viewBox="0 0 8.1 8.2" style="position:absolute;left:-1px;top:-1px"><path d="M1.8 4.1 L3.9 6.0 L6.7 1.9" fill="none" stroke="#2a2a2a" stroke-width="1.8"/></svg></div>
<div style="position:absolute;left:640.40px;top:380.46px;width:8.10px;height:8.20px;background:linear-gradient(#f2f2f2,#dcdcdc);border:1px solid #b0b0b0;box-sizing:border-box;border-radius:2px;"><svg width="8.1" height="8.2" viewBox="0 0 8.1 8.2" style="position:absolute;left:-1px;top:-1px"><path d="M1.8 4.1 L3.9 6.0 L6.7 1.9" fill="none" stroke="#2a2a2a" stroke-width="1.8"/></svg></div>
<div style="position:absolute;left:667.10px;top:380.46px;width:8.10px;height:8.20px;background:linear-gradient(#f2f2f2,#dcdcdc);border:1px solid #b0b0b0;box-sizing:border-box;border-radius:2px;"><svg width="8.1" height="8.2" viewBox="0 0 8.1 8.2" style="position:absolute;left:-1px;top:-1px"><path d="M1.8 4.1 L3.9 6.0 L6.7 1.9" fill="none" stroke="#2a2a2a" stroke-width="1.8"/></svg></div>
<div style="position:absolute;left:693.60px;top:380.46px;width:8.10px;height:8.20px;background:linear-gradient(#f2f2f2,#dcdcdc);border:1px solid #b0b0b0;box-sizing:border-box;border-radius:2px;"><svg width="8.1" height="8.2" viewBox="0 0 8.1 8.2" style="position:absolute;left:-1px;top:-1px"><path d="M1.8 4.1 L3.9 6.0 L6.7 1.9" fill="none" stroke="#2a2a2a" stroke-width="1.8"/></svg></div>
<div style="position:absolute;left:9.00px;top:393.33px;width:11.00px;height:14.37px;background:#dcdcdc;"></div>
<svg style="position:absolute;left:0;top:0;overflow:visible" width="1" height="1"><text x="11.50" y="404.03" font-family="Liberation Sans" font-size="10.75" font-weight="normal" fill="#222" textLength="6.40" lengthAdjust="spacingAndGlyphs">X</text></svg>
<div style="position:absolute;left:20.00px;top:393.33px;width:101.80px;height:14.37px;background:#ffffff;"></div>
<svg style="position:absolute;left:110.9px;top:398.43px" width="5" height="4.5" viewBox="0 0 5 4.5"><path d="M0 0.3 L5 0.3 L2.5 4.3 Z" fill="#111"/></svg>
<div style="position:absolute;left:121.80px;top:393.33px;width:1.20px;height:14.37px;background:#b9d8f0;"></div>
<div style="position:absolute;left:123.00px;top:393.33px;width:113.70px;height:14.37px;background:#ffffff;"></div>
<svg style="position:absolute;left:0;top:0;overflow:visible" width="1" height="1"><text x="125.80" y="404.03" font-family="Liberation Sans" font-size="10.75" font-weight="normal" fill="#1e1e1e" textLength="49.63" lengthAdjust="spacingAndGlyphs">No Balance</text></svg>
<svg style="position:absolute;left:227.2px;top:398.43px" width="5" height="4.5" viewBox="0 0 5 4.5"><path d="M0 0.3 L5 0.3 L2.5 4.3 Z" fill="#111"/></svg>
<div style="position:absolute;left:240.00px;top:393.33px;width:29.20px;height:14.37px;background:#ffffff;"></div>
<div style="position:absolute;left:250.00px;top:394.83px;width:8.10px;height:8.20px;background:linear-gradient(#f2f2f2,#dcdcdc);border:1px solid #b0b0b0;box-sizing:border-box;border-radius:2px;"></div>
<div style="position:absolute;left:272.80px;top:393.33px;width:70.20px;height:14.37px;background:#ffffff;"></div>
<svg style="position:absolute;left:0;top:0;overflow:visible" width="1" height="1"><text x="313.52" y="404.03" font-family="Liberation Sans" font-size="10.75" font-weight="normal" fill="#222" textLength="18.68" lengthAdjust="spacingAndGlyphs">0.00</text></svg>
<div style="position:absolute;left:346.90px;top:393.33px;width:70.00px;height:14.37px;background:#ffffff;"></div>
<svg style="position:absolute;left:0;top:0;overflow:visible" width="1" height="1"><text x="387.72" y="404.03" font-family="Liberation Sans" font-size="10.75" font-weight="normal" fill="#222" textLength="18.68" lengthAdjust="spacingAndGlyphs">0.00</text></svg>
<div style="position:absolute;left:420.60px;top:393.33px;width:30.50px;height:14.37px;background:#ffffff;"></div>
<div style="position:absolute;left:431.30px;top:394.83px;width:8.10px;height:8.20px;background:linear-gradient(#f2f2f2,#dcdcdc);border:1px solid #b0b0b0;box-sizing:border-box;border-radius:2px;"></div>
<div style="position:absolute;left:453.90px;top:393.33px;width:72.20px;height:14.37px;background:#ffffff;"></div>
<svg style="position:absolute;left:0;top:0;overflow:visible" width="1" height="1"><text x="496.62" y="404.03" font-family="Liberation Sans" font-size="10.75" font-weight="normal" fill="#222" textLength="18.68" lengthAdjust="spacingAndGlyphs">0.00</text></svg>
<div style="position:absolute;left:529.40px;top:393.33px;width:71.70px;height:14.37px;background:#ffffff;"></div>
<svg style="position:absolute;left:0;top:0;overflow:visible" width="1" height="1"><text x="571.92" y="404.03" font-family="Liberation Sans" font-size="10.75" font-weight="normal" fill="#222" textLength="18.68" lengthAdjust="spacingAndGlyphs">0.00</text></svg>
<div style="position:absolute;left:604.70px;top:393.33px;width:107.00px;height:14.37px;background:#ffffff;"></div>
<div style="position:absolute;left:613.30px;top:394.83px;width:8.10px;height:8.20px;background:linear-gradient(#f2f2f2,#dcdcdc);border:1px solid #b0b0b0;box-sizing:border-box;border-radius:2px;"><svg width="8.1" height="8.2" viewBox="0 0 8.1 8.2" style="position:absolute;left:-1px;top:-1px"><path d="M1.8 4.1 L3.9 6.0 L6.7 1.9" fill="none" stroke="#2a2a2a" stroke-width="1.8"/></svg></div>
<div style="position:absolute;left:640.40px;top:394.83px;width:8.10px;height:8.20px;background:linear-gradient(#f2f2f2,#dcdcdc);border:1px solid #b0b0b0;box-sizing:border-box;border-radius:2px;"><svg width="8.1" height="8.2" viewBox="0 0 8.1 8.2" style="position:absolute;left:-1px;top:-1px"><path d="M1.8 4.1 L3.9 6.0 L6.7 1.9" fill="none" stroke="#2a2a2a" stroke-width="1.8"/></svg></div>
<div style="position:absolute;left:667.10px;top:394.83px;width:8.10px;height:8.20px;background:linear-gradient(#f2f2f2,#dcdcdc);border:1px solid #b0b0b0;box-sizing:border-box;border-radius:2px;"><svg width="8.1" height="8.2" viewBox="0 0 8.1 8.2" style="position:absolute;left:-1px;top:-1px"><path d="M1.8 4.1 L3.9 6.0 L6.7 1.9" fill="none" stroke="#2a2a2a" stroke-width="1.8"/></svg></div>
<div style="position:absolute;left:693.60px;top:394.83px;width:8.10px;height:8.20px;background:linear-gradient(#f2f2f2,#dcdcdc);border:1px solid #b0b0b0;box-sizing:border-box;border-radius:2px;"><svg width="8.1" height="8.2" viewBox="0 0 8.1 8.2" style="position:absolute;left:-1px;top:-1px"><path d="M1.8 4.1 L3.9 6.0 L6.7 1.9" fill="none" stroke="#2a2a2a" stroke-width="1.8"/></svg></div>
<div style="position:absolute;left:9.00px;top:407.70px;width:11.00px;height:14.37px;background:#dcdcdc;"></div>
<svg style="position:absolute;left:0;top:0;overflow:visible" width="1" height="1"><text x="11.50" y="418.40" font-family="Liberation Sans" font-size="10.75" font-weight="normal" fill="#222" textLength="6.40" lengthAdjust="spacingAndGlyphs">X</text></svg>
<div style="position:absolute;left:20.00px;top:407.70px;width:101.80px;height:14.37px;background:#ebf2fa;"></div>
<svg style="position:absolute;left:110.9px;top:412.80px" width="5" height="4.5" viewBox="0 0 5 4.5"><path d="M0 0.3 L5 0.3 L2.5 4.3 Z" fill="#111"/></svg>
<div style="position:absolute;left:121.80px;top:407.70px;width:1.20px;height:14.37px;background:#b9d8f0;"></div>
<div style="position:absolute;left:123.00px;top:407.70px;width:113.70px;height:14.37px;background:#ebf2fa;"></div>
<svg style="position:absolute;left:0;top:0;overflow:visible" width="1" height="1"><text x="125.80" y="418.40" font-family="Liberation Sans" font-size="10.75" font-weight="normal" fill="#1e1e1e" textLength="49.63" lengthAdjust="spacingAndGlyphs">No Balance</text></svg>
<svg style="position:absolute;left:227.2px;top:412.80px" width="5" height="4.5" viewBox="0 0 5 4.5"><path d="M0 0.3 L5 0.3 L2.5 4.3 Z" fill="#111"/></svg>
<div style="position:absolute;left:240.00px;top:407.70px;width:29.20px;height:14.37px;background:#ebf2fa;"></div>
<div style="position:absolute;left:250.00px;top:409.20px;width:8.10px;height:8.20px;background:linear-gradient(#f2f2f2,#dcdcdc);border:1px solid #b0b0b0;box-sizing:border-box;border-radius:2px;"></div>
<div style="position:absolute;left:272.80px;top:407.70px;width:70.20px;height:14.37px;background:#ebf2fa;"></div>
<svg style="position:absolute;left:0;top:0;overflow:visible" width="1" height="1"><text x="313.52" y="418.40" font-family="Liberation Sans" font-size="10.75" font-weight="normal" fill="#222" textLength="18.68" lengthAdjust="spacingAndGlyphs">0.00</text></svg>
<div style="position:absolute;left:346.90px;top:407.70px;width:70.00px;height:14.37px;background:#ebf2fa;"></div>
<svg style="position:absolute;left:0;top:0;overflow:visible" width="1" height="1"><text x="387.72" y="418.40" font-family="Liberation Sans" font-size="10.75" font-weight="normal" fill="#222" textLength="18.68" lengthAdjust="spacingAndGlyphs">0.00</text></svg>
<div style="position:absolute;left:420.60px;top:407.70px;width:30.50px;height:14.37px;background:#ebf2fa;"></div>
<div style="position:absolute;left:431.30px;top:409.20px;width:8.10px;height:8.20px;background:linear-gradient(#f2f2f2,#dcdcdc);border:1px solid #b0b0b0;box-sizing:border-box;border-radius:2px;"></div>
<div style="position:absolute;left:453.90px;top:407.70px;width:72.20px;height:14.37px;background:#ebf2fa;"></div>
<svg style="position:absolute;left:0;top:0;overflow:visible" width="1" height="1"><text x="496.62" y="418.40" font-family="Liberation Sans" font-size="10.75" font-weight="normal" fill="#222" textLength="18.68" lengthAdjust="spacingAndGlyphs">0.00</text></svg>
<div style="position:absolute;left:529.40px;top:407.70px;width:71.70px;height:14.37px;background:#ebf2fa;"></div>
<svg style="position:absolute;left:0;top:0;overflow:visible" width="1" height="1"><text x="571.92" y="418.40" font-family="Liberation Sans" font-size="10.75" font-weight="normal" fill="#222" textLength="18.68" lengthAdjust="spacingAndGlyphs">0.00</text></svg>
<div style="position:absolute;left:604.70px;top:407.70px;width:107.00px;height:14.37px;background:#ebf2fa;"></div>
<div style="position:absolute;left:613.30px;top:409.20px;width:8.10px;height:8.20px;background:linear-gradient(#f2f2f2,#dcdcdc);border:1px solid #b0b0b0;box-sizing:border-box;border-radius:2px;"><svg width="8.1" height="8.2" viewBox="0 0 8.1 8.2" style="position:absolute;left:-1px;top:-1px"><path d="M1.8 4.1 L3.9 6.0 L6.7 1.9" fill="none" stroke="#2a2a2a" stroke-width="1.8"/></svg></div>
<div style="position:absolute;left:640.40px;top:409.20px;width:8.10px;height:8.20px;background:linear-gradient(#f2f2f2,#dcdcdc);border:1px solid #b0b0b0;box-sizing:border-box;border-radius:2px;"><svg width="8.1" height="8.2" viewBox="0 0 8.1 8.2" style="position:absolute;left:-1px;top:-1px"><path d="M1.8 4.1 L3.9 6.0 L6.7 1.9" fill="none" stroke="#2a2a2a" stroke-width="1.8"/></svg></div>
<div style="position:absolute;left:667.10px;top:409.20px;width:8.10px;height:8.20px;background:linear-gradient(#f2f2f2,#dcdcdc);border:1px solid #b0b0b0;box-sizing:border-box;border-radius:2px;"><svg width="8.1" height="8.2" viewBox="0 0 8.1 8.2" style="position:absolute;left:-1px;top:-1px"><path d="M1.8 4.1 L3.9 6.0 L6.7 1.9" fill="none" stroke="#2a2a2a" stroke-width="1.8"/></svg></div>
<div style="position:absolute;left:693.60px;top:409.20px;width:8.10px;height:8.20px;background:linear-gradient(#f2f2f2,#dcdcdc);border:1px solid #b0b0b0;box-sizing:border-box;border-radius:2px;"><svg width="8.1" height="8.2" viewBox="0 0 8.1 8.2" style="position:absolute;left:-1px;top:-1px"><path d="M1.8 4.1 L3.9 6.0 L6.7 1.9" fill="none" stroke="#2a2a2a" stroke-width="1.8"/></svg></div>
<div style="position:absolute;left:9.00px;top:422.07px;width:11.00px;height:14.37px;background:#dcdcdc;"></div>
<svg style="position:absolute;left:0;top:0;overflow:visible" width="1" height="1"><text x="11.50" y="432.77" font-family="Liberation Sans" font-size="10.75" font-weight="normal" fill="#222" textLength="6.40" lengthAdjust="spacingAndGlyphs">X</text></svg>
<div style="position:absolute;left:20.00px;top:422.07px;width:101.80px;height:14.37px;background:#ffffff;"></div>
<svg style="position:absolute;left:110.9px;top:427.17px" width="5" height="4.5" viewBox="0 0 5 4.5"><path d="M0 0.3 L5 0.3 L2.5 4.3 Z" fill="#111"/></svg>
<div style="position:absolute;left:121.80px;top:422.07px;width:1.20px;height:14.37px;background:#b9d8f0;"></div>
<div style="position:absolute;left:123.00px;top:422.07px;width:113.70px;height:14.37px;background:#ffffff;"></div>
<svg style="position:absolute;left:0;top:0;overflow:visible" width="1" height="1"><text x="125.80" y="432.77" font-family="Liberation Sans" font-size="10.75" font-weight="normal" fill="#1e1e1e" textLength="49.63" lengthAdjust="spacingAndGlyphs">No Balance</text></svg>
<svg style="position:absolute;left:227.2px;top:427.17px" width="5" height="4.5" viewBox="0 0 5 4.5"><path d="M0 0.3 L5 0.3 L2.5 4.3 Z" fill="#111"/></svg>
<div style="position:absolute;left:240.00px;top:422.07px;width:29.20px;height:14.37px;background:#ffffff;"></div>
<div style="position:absolute;left:250.00px;top:423.57px;width:8.10px;height:8.20px;background:linear-gradient(#f2f2f2,#dcdcdc);border:1px solid #b0b0b0;box-sizing:border-box;border-radius:2px;"></div>
<div style="position:absolute;left:272.80px;top:422.07px;width:70.20px;height:14.37px;background:#ffffff;"></div>
<svg style="position:absolute;left:0;top:0;overflow:visible" width="1" height="1"><text x="313.52" y="432.77" font-family="Liberation Sans" font-size="10.75" font-weight="normal" fill="#222" textLength="18.68" lengthAdjust="spacingAndGlyphs">0.00</text></svg>
<div style="position:absolute;left:346.90px;top:422.07px;width:70.00px;height:14.37px;background:#ffffff;"></div>
<svg style="position:absolute;left:0;top:0;overflow:visible" width="1" height="1"><text x="387.72" y="432.77" font-family="Liberation Sans" font-size="10.75" font-weight="normal" fill="#222" textLength="18.68" lengthAdjust="spacingAndGlyphs">0.00</text></svg>
<div style="position:absolute;left:420.60px;top:422.07px;width:30.50px;height:14.37px;background:#ffffff;"></div>
<div style="position:absolute;left:431.30px;top:423.57px;width:8.10px;height:8.20px;background:linear-gradient(#f2f2f2,#dcdcdc);border:1px solid #b0b0b0;box-sizing:border-box;border-radius:2px;"></div>
<div style="position:absolute;left:453.90px;top:422.07px;width:72.20px;height:14.37px;background:#ffffff;"></div>
<svg style="position:absolute;left:0;top:0;overflow:visible" width="1" height="1"><text x="496.62" y="432.77" font-family="Liberation Sans" font-size="10.75" font-weight="normal" fill="#222" textLength="18.68" lengthAdjust="spacingAndGlyphs">0.00</text></svg>
<div style="position:absolute;left:529.40px;top:422.07px;width:71.70px;height:14.37px;background:#ffffff;"></div>
<svg style="position:absolute;left:0;top:0;overflow:visible" width="1" height="1"><text x="571.92" y="432.77" font-family="Liberation Sans" font-size="10.75" font-weight="normal" fill="#222" textLength="18.68" lengthAdjust="spacingAndGlyphs">0.00</text></svg>
<div style="position:absolute;left:604.70px;top:422.07px;width:107.00px;height:14.37px;background:#ffffff;"></div>
<div style="position:absolute;left:613.30px;top:423.57px;width:8.10px;height:8.20px;background:linear-gradient(#f2f2f2,#dcdcdc);border:1px solid #b0b0b0;box-sizing:border-box;border-radius:2px;"><svg width="8.1" height="8.2" viewBox="0 0 8.1 8.2" style="position:absolute;left:-1px;top:-1px"><path d="M1.8 4.1 L3.9 6.0 L6.7 1.9" fill="none" stroke="#2a2a2a" stroke-width="1.8"/></svg></div>
<div style="position:absolute;left:640.40px;top:423.57px;width:8.10px;height:8.20px;background:linear-gradient(#f2f2f2,#dcdcdc);border:1px solid #b0b0b0;box-sizing:border-box;border-radius:2px;"><svg width="8.1" height="8.2" viewBox="0 0 8.1 8.2" style="position:absolute;left:-1px;top:-1px"><path d="M1.8 4.1 L3.9 6.0 L6.7 1.9" fill="none" stroke="#2a2a2a" stroke-width="1.8"/></svg></div>
<div style="position:absolute;left:667.10px;top:423.57px;width:8.10px;height:8.20px;background:linear-gradient(#f2f2f2,#dcdcdc);border:1px solid #b0b0b0;box-sizing:border-box;border-radius:2px;"><svg width="8.1" height="8.2" viewBox="0 0 8.1 8.2" style="position:absolute;left:-1px;top:-1px"><path d="M1.8 4.1 L3.9 6.0 L6.7 1.9" fill="none" stroke="#2a2a2a" stroke-width="1.8"/></svg></div>
<div style="position:absolute;left:693.60px;top:423.57px;width:8.10px;height:8.20px;background:linear-gradient(#f2f2f2,#dcdcdc);border:1px solid #b0b0b0;box-sizing:border-box;border-radius:2px;"><svg width="8.1" height="8.2" viewBox="0 0 8.1 8.2" style="position:absolute;left:-1px;top:-1px"><path d="M1.8 4.1 L3.9 6.0 L6.7 1.9" fill="none" stroke="#2a2a2a" stroke-width="1.8"/></svg></div>
<svg style="position:absolute;left:0;top:0;overflow:visible" width="1" height="1"><text x="36.70" y="458.75" font-family="Liberation Sans" font-size="9.7" font-weight="bold" fill="#222" textLength="312.50" lengthAdjust="spacingAndGlyphs">If the employee has a Pension Tracing Number, please enter it here:</text></svg>
<div style="position:absolute;left:371.60px;top:443.90px;width:68.80px;height:23.50px;background:#fff;border:1px solid #d3d3d3;box-sizing:border-box;border-radius:3px;"></div>
<svg style="position:absolute;left:0;top:0" width="720" height="495"><path d="M-6,263 C-5.0,261.6 -2.7,256.9 0.0,254.8 C2.7,252.7 5.0,251.8 10.0,250.2 C15.0,248.5 21.7,246.7 30.0,244.9 C38.3,243.1 46.7,241.6 60.0,239.5 C73.3,237.4 95.0,233.9 110.0,232.3 C125.0,230.7 136.7,230.8 150.0,229.8 C163.3,228.8 178.3,227.3 190.0,226.5 C201.7,225.7 204.2,225.6 220.0,224.9 C235.8,224.2 260.8,223.0 285.0,222.4 C309.2,221.8 339.2,221.4 365.0,221.3 C390.8,221.2 422.5,221.8 440.0,222.1 C457.5,222.4 458.3,222.7 470.0,223.1 C481.7,223.5 498.3,224.1 510.0,224.7 C521.7,225.3 530.0,225.8 540.0,226.5 C550.0,227.2 560.0,227.9 570.0,228.6 C580.0,229.3 590.0,229.8 600.0,230.8 C610.0,231.8 620.0,233.2 630.0,234.4 C640.0,235.6 650.0,236.3 660.0,237.8 C670.0,239.3 680.0,241.3 690.0,243.5 C700.0,245.7 712.5,247.8 720.0,250.9 C727.5,254.0 735.0,258.2 735.0,262.0 C735.0,265.8 727.5,270.1 720.0,273.5 C712.5,276.9 700.0,280.0 690.0,282.3 C680.0,284.6 668.3,286.1 660.0,287.3 C651.7,288.5 648.3,288.7 640.0,289.7 C631.7,290.7 621.7,292.0 610.0,293.2 C598.3,294.4 581.7,295.8 570.0,296.7 C558.3,297.6 555.8,297.7 540.0,298.5 C524.2,299.3 499.2,300.7 475.0,301.5 C450.8,302.3 419.2,303.2 395.0,303.5 C370.8,303.8 345.8,303.4 330.0,303.2 C314.2,303.0 315.0,302.9 300.0,302.5 C285.0,302.1 255.0,301.5 240.0,301.0 C225.0,300.5 223.3,300.4 210.0,299.6 C196.7,298.8 173.3,297.2 160.0,296.4 C146.7,295.6 141.7,295.7 130.0,294.7 C118.3,293.7 101.7,291.9 90.0,290.3 C78.3,288.7 70.0,287.0 60.0,285.0 C50.0,283.0 40.0,280.8 30.0,278.4 C20.0,275.9 6.0,272.9 0.0,270.3 C-6.0,267.7 -5.0,264.2 -6.0,263.0" fill="none" stroke="#ea1c24" stroke-width="5"/></svg>
</body></html>
